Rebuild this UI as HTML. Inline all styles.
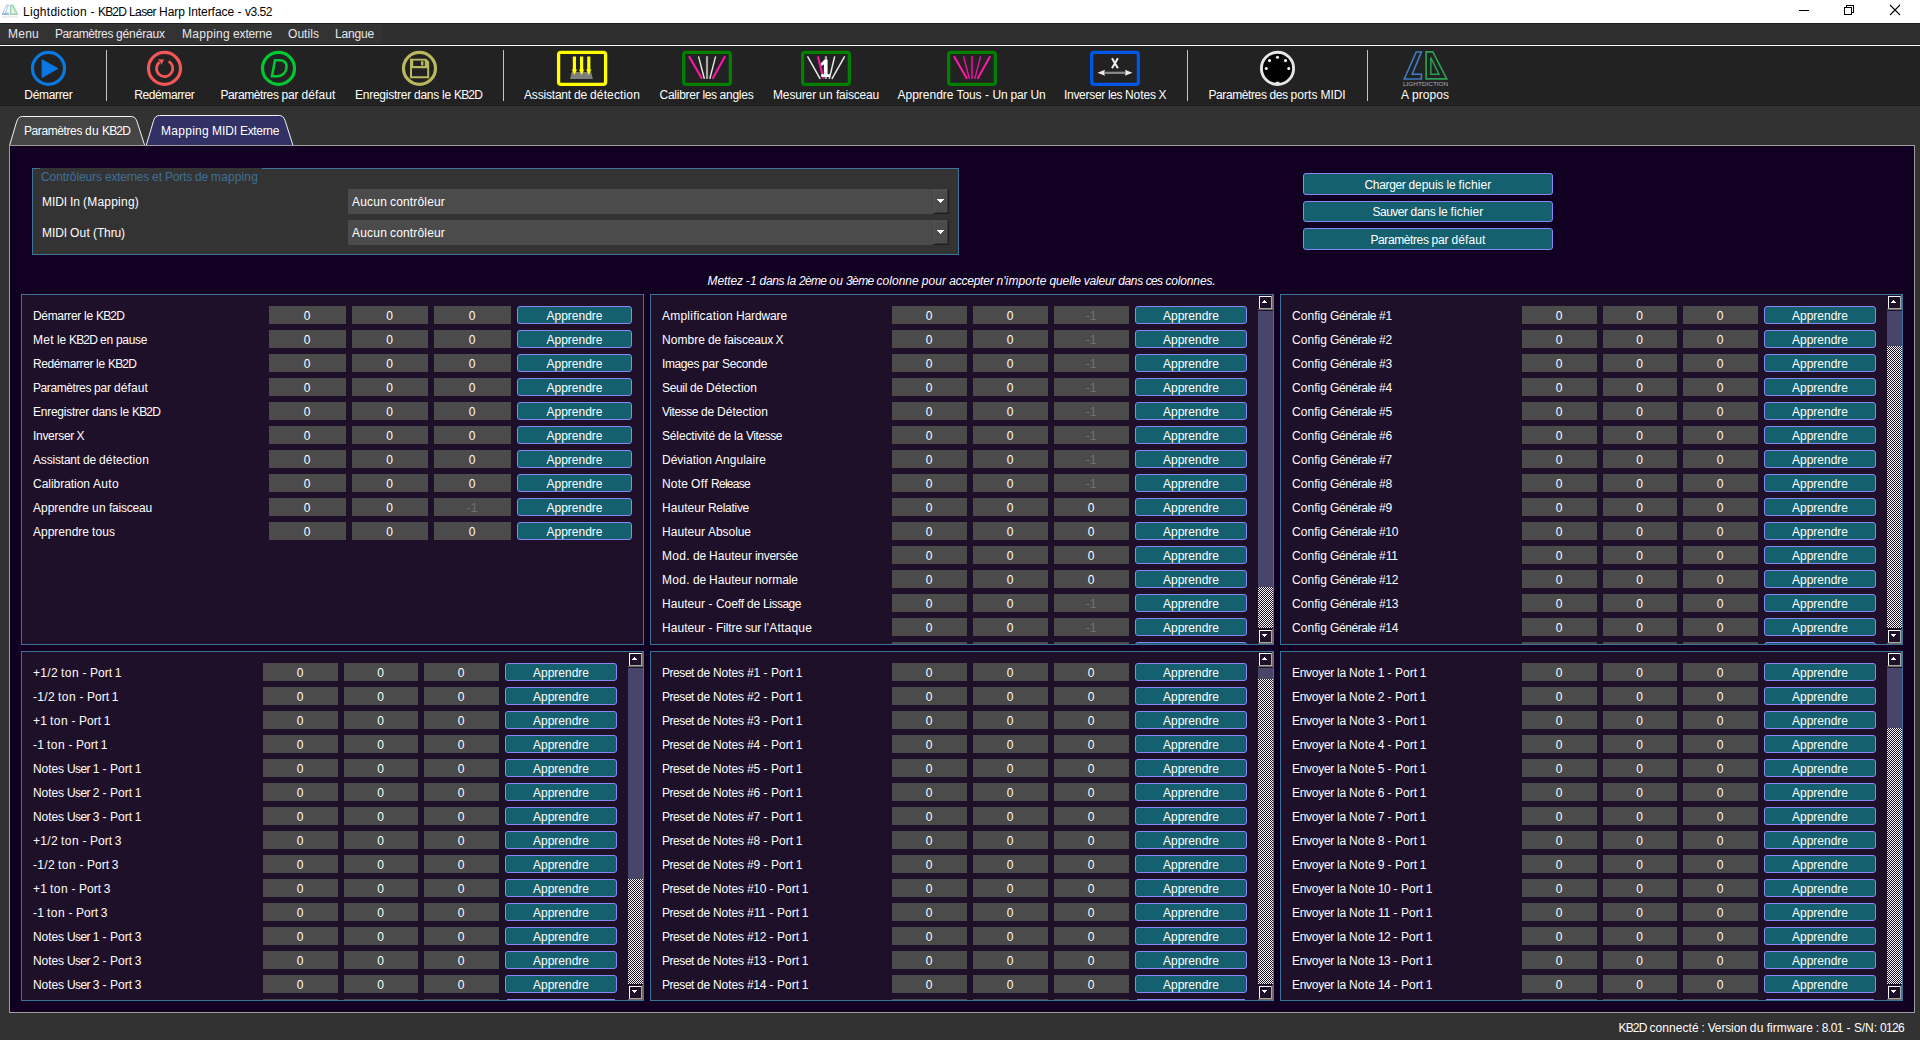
<!DOCTYPE html>
<html><head><meta charset="utf-8"><title>Lightdiction - KB2D Laser Harp Interface - v3.52</title>
<style>
html,body{margin:0;padding:0}
body{width:1920px;height:1040px;position:relative;overflow:hidden;background:#323232;font-family:"Liberation Sans",sans-serif;font-size:12px;color:#fff}
.t{position:absolute;white-space:pre;display:block;font-size:12px;line-height:14px;color:#fff}
div,svg{box-sizing:border-box}
.f{position:absolute;height:18px;background:#4b4b4b}
.b{position:absolute;height:18px;background:#14606e;border:1px solid #8a86f6;border-radius:3px}
.ck{position:absolute;background:repeating-conic-gradient(#1e1029 0% 25%,#fff 0% 50%) 0 0/2px 2px}
.th{position:absolute;background:#47456a}
</style></head><body>
<div style="position:absolute;left:0px;top:0px;width:1920px;height:23px;background:#fff;"></div>
<svg style="position:absolute;left:0;top:0" width="20" height="20" viewBox="0 0 20 20">
<path d="M6.4 5.1 L8.5 5.1 L5.5 13 L8.5 13 L8.5 14.5 L2.4 14.5 Z" fill="none" stroke="#8db2de" stroke-width="0.8"/>
<rect x="2.2" y="13.2" width="6.6" height="1.5" fill="#8db2de"/>
<path d="M10.3 5.1 L13 5.1 L17.8 14.5 L10.3 14.5 Z" fill="#bfe4cd" stroke="#7fc69c" stroke-width="0.8"/>
<path d="M11.9 7.4 L14.6 13 L11.9 13 Z" fill="#f4fbf6"/>
<rect x="2" y="16.3" width="16" height="1.1" fill="#e6e6e6"/>
</svg>
<span class="t" style="left:23px;top:4.84px;letter-spacing:0.273px;color:#000;">Lightdiction </span>
<span class="t" style="left:90.5px;top:4.84px;letter-spacing:0.000px;color:#000;">- </span>
<span class="t" style="left:98px;top:4.84px;letter-spacing:-0.840px;color:#000;">KB2D </span>
<span class="t" style="left:129px;top:4.84px;letter-spacing:-0.606px;color:#000;">Laser </span>
<span class="t" style="left:159px;top:4.84px;letter-spacing:-0.004px;color:#000;">Harp </span>
<span class="t" style="left:188px;top:4.84px;letter-spacing:-0.078px;color:#000;">Interface </span>
<span class="t" style="left:237.5px;top:4.84px;letter-spacing:0.000px;color:#000;">- </span>
<span class="t" style="left:245px;top:4.84px;letter-spacing:-0.472px;color:#000;">v3.52</span>
<svg style="position:absolute;left:1780px;top:0" width="140" height="23" viewBox="0 0 140 23" shape-rendering="crispEdges">
<rect x="19" y="10" width="10" height="1" fill="#000"/>
<g fill="none" stroke="#000" stroke-width="1"><rect x="64.5" y="7.5" width="7" height="7"/><path d="M66.5 7.5 V5.5 H73.5 V12.5 H71.5"/></g>
<g stroke="#000" stroke-width="1.1" shape-rendering="auto"><path d="M110 5 L120 15 M120 5 L110 15"/></g>
</svg>
<div style="position:absolute;left:0px;top:23px;width:1920px;height:22px;background:#2f2f2f;"></div>
<div style="position:absolute;left:0px;top:23px;width:382px;height:22px;background:#333;"></div>
<div style="position:absolute;left:0px;top:23px;width:1920px;height:1px;background:#1f1f1f;"></div>
<div style="position:absolute;left:0px;top:44px;width:1920px;height:1px;background:#1e1e1e;"></div>
<div style="position:absolute;left:0px;top:45px;width:1920px;height:1px;background:#fff;"></div>
<span class="t" style="left:8px;top:26.84px;letter-spacing:0.242px;color:#e8e8ee;">Menu</span>
<span class="t" style="left:55px;top:26.84px;letter-spacing:-0.403px;color:#e8e8ee;">Paramètres </span>
<span class="t" style="left:116px;top:26.84px;letter-spacing:-0.131px;color:#e8e8ee;">généraux</span>
<span class="t" style="left:182px;top:26.84px;letter-spacing:0.281px;color:#e8e8ee;">Mapping </span>
<span class="t" style="left:233px;top:26.84px;letter-spacing:-0.147px;color:#e8e8ee;">externe</span>
<span class="t" style="left:288px;top:26.84px;letter-spacing:0.052px;color:#e8e8ee;">Outils</span>
<span class="t" style="left:335px;top:26.84px;letter-spacing:-0.174px;color:#e8e8ee;">Langue</span>
<div style="position:absolute;left:0px;top:46px;width:1920px;height:60px;background:#222;"></div>
<div style="position:absolute;left:0px;top:105px;width:1920px;height:1px;background:#1b1b1b;"></div>
<div style="position:absolute;left:106px;top:50px;width:1px;height:51px;background:#c4c4c4;"></div>
<div style="position:absolute;left:503px;top:50px;width:1px;height:51px;background:#c4c4c4;"></div>
<div style="position:absolute;left:1187px;top:50px;width:1px;height:51px;background:#c4c4c4;"></div>
<div style="position:absolute;left:1367px;top:50px;width:1px;height:51px;background:#c4c4c4;"></div>
<span class="t" style="left:24.33px;top:87.84px;letter-spacing:-0.334px;">Démarrer</span>
<span class="t" style="left:134.3px;top:87.84px;letter-spacing:-0.403px;">Redémarrer</span>
<span class="t" style="left:220.5px;top:87.84px;letter-spacing:-0.403px;">Paramètres </span>
<span class="t" style="left:281.5px;top:87.84px;letter-spacing:-0.115px;">par </span>
<span class="t" style="left:301.5px;top:87.84px;letter-spacing:0.104px;">défaut</span>
<span class="t" style="left:355px;top:87.84px;letter-spacing:-0.244px;">Enregistrer </span>
<span class="t" style="left:414px;top:87.84px;letter-spacing:-0.258px;">dans </span>
<span class="t" style="left:442px;top:87.84px;letter-spacing:-0.172px;">le </span>
<span class="t" style="left:454px;top:87.84px;letter-spacing:-0.840px;">KB2D</span>
<span class="t" style="left:524px;top:87.84px;letter-spacing:-0.188px;">Assistant </span>
<span class="t" style="left:574px;top:87.84px;letter-spacing:-0.180px;">de </span>
<span class="t" style="left:590px;top:87.84px;letter-spacing:0.144px;">détection</span>
<span class="t" style="left:659.5px;top:87.84px;letter-spacing:-0.252px;">Calibrer </span>
<span class="t" style="left:702.5px;top:87.84px;letter-spacing:-0.448px;">les </span>
<span class="t" style="left:719.5px;top:87.84px;letter-spacing:-0.229px;">angles</span>
<span class="t" style="left:773px;top:87.84px;letter-spacing:-0.145px;">Mesurer </span>
<span class="t" style="left:819px;top:87.84px;letter-spacing:0.320px;">un </span>
<span class="t" style="left:836px;top:87.84px;letter-spacing:-0.213px;">faisceau</span>
<span class="t" style="left:897.5px;top:87.84px;letter-spacing:-0.005px;">Apprendre </span>
<span class="t" style="left:956.5px;top:87.84px;letter-spacing:-0.090px;">Tous </span>
<span class="t" style="left:985px;top:87.84px;letter-spacing:0.000px;">- </span>
<span class="t" style="left:992.5px;top:87.84px;letter-spacing:-0.172px;">Un </span>
<span class="t" style="left:1010.5px;top:87.84px;letter-spacing:-0.115px;">par </span>
<span class="t" style="left:1030.5px;top:87.84px;letter-spacing:-0.172px;">Un</span>
<span class="t" style="left:1064px;top:87.84px;letter-spacing:-0.295px;">Inverser </span>
<span class="t" style="left:1108px;top:87.84px;letter-spacing:-0.448px;">les </span>
<span class="t" style="left:1125px;top:87.84px;letter-spacing:-0.072px;">Notes </span>
<span class="t" style="left:1158.49px;top:87.84px;letter-spacing:0.000px;">X</span>
<span class="t" style="left:1208.5px;top:87.84px;letter-spacing:-0.403px;">Paramètres </span>
<span class="t" style="left:1269.5px;top:87.84px;letter-spacing:-0.453px;">des </span>
<span class="t" style="left:1290.5px;top:87.84px;letter-spacing:0.062px;">ports </span>
<span class="t" style="left:1320.5px;top:87.84px;letter-spacing:-0.086px;">MIDI</span>
<span class="t" style="left:1400.99px;top:87.84px;letter-spacing:0.000px;">A </span>
<span class="t" style="left:1412px;top:87.84px;letter-spacing:0.049px;">propos</span>
<svg style="position:absolute;left:0;top:46px" width="1920" height="60" viewBox="0 46 1920 60">
<circle cx="48.5" cy="68.4" r="16" fill="none" stroke="#0b78e3" stroke-width="3.2"/>
<path d="M42.2 60 L57.6 68.5 L42.2 77.2 Z" fill="#0b78e3" stroke="#0b78e3" stroke-width="1.2" stroke-linejoin="round"/>
<circle cx="164.5" cy="68.4" r="16" fill="none" stroke="#f25757" stroke-width="3.2"/>
<path d="M168.6 61.4 A8.1 8.1 0 1 1 159.6 62.1" fill="none" stroke="#f25757" stroke-width="2.7"/>
<path d="M158 59.2 L164.2 59.6 L161.2 65 L160.6 62.6 Z" fill="#f25757"/>
<circle cx="278.5" cy="68.4" r="16" fill="none" stroke="#00c832" stroke-width="3.2"/>
<path d="M275 60.2 L272 76.2 L277.5 76.2 C283.5 76.2 286.6 71 286.6 66.4 C286.6 62 283.5 60.2 279.5 60.2 Z" fill="none" stroke="#00c832" stroke-width="2.6" stroke-linejoin="miter"/>
<circle cx="419.5" cy="68.4" r="16" fill="none" stroke="#b8b85e" stroke-width="3.2"/>
<path d="M411 59.8 L425.8 59.8 L428.2 62.2 L428.2 77.2 L411 77.2 Z" fill="none" stroke="#b8b85e" stroke-width="2"/>
<path d="M411 59.8 H425.8 L428.2 62.2 V68.2 H411 Z" fill="#b8b85e"/>
<rect x="413.2" y="60.6" width="11.6" height="5.4" fill="#222"/>
<rect x="421" y="61.2" width="2.4" height="4.2" fill="#b8b85e"/>
<rect x="558.6" y="52.4" width="47" height="32" rx="2.3" fill="none" stroke="#ffff00" stroke-width="3.3"/>
<path d="M571.7 72 L591.2 72 L592.8 79 L570 79 Z" fill="#7d7d7d"/>
<path d="M572.8 56.4 H576.0 V69.4 H577.1 L574.4 75 L571.6999999999999 69.4 H572.8 Z" fill="#ffff00"/>
<path d="M580.0 56.4 H583.2 V69.4 H584.3000000000001 L581.6 75 L578.9 69.4 H580.0 Z" fill="#ffff00"/>
<path d="M587.1999999999999 56.4 H590.4 V69.4 H591.5 L588.8 75 L586.0999999999999 69.4 H587.1999999999999 Z" fill="#ffff00"/>
<rect x="683.65" y="52.4" width="46.7" height="32" rx="2.3" fill="none" stroke="#008000" stroke-width="3.3"/>
<path d="M689 56.2 L702 78.8" stroke="#ff17a6" stroke-width="2.1"/>
<path d="M698.5 56.4 L704.4 78.8" stroke="#e8e8e8" stroke-width="1.4"/>
<path d="M707 56.2 V78.9" stroke="#a6a6a6" stroke-width="2.2"/>
<path d="M715.6 56.4 L709.8 78.8" stroke="#e8e8e8" stroke-width="1.4"/>
<path d="M725.1 56.2 L712.6 78.8" stroke="#ff17a6" stroke-width="2.1"/>
<rect x="802.65" y="52.4" width="46.7" height="32" rx="2.3" fill="none" stroke="#008000" stroke-width="3.3"/>
<path d="M807.5 56.4 L820.2 78.8" stroke="#e8e8e8" stroke-width="1.5"/>
<path d="M817.9 56.4 L823.5 78.6" stroke="#ff17a6" stroke-width="2.1"/>
<path d="M825.9 56.2 V78.9" stroke="#a6a6a6" stroke-width="2.2"/>
<path d="M834.7 56.4 L829.3 78.8" stroke="#e8e8e8" stroke-width="1.5"/>
<path d="M844.7 56.4 L831.9 78.8" stroke="#e8e8e8" stroke-width="1.5"/>
<path d="M824.6 59.6 L827.6 59.6 L827.6 74.2 L829.8 74.2 L829.8 77 L821.2 77 L821.2 74.2 L823.9 74.2 L823.9 64.6 L821.2 66 L821 63.2 Z" fill="#fff"/>
<rect x="948.65" y="52.4" width="46.7" height="32" rx="2.3" fill="none" stroke="#008000" stroke-width="3.3"/>
<path d="M954 56.2 L967 78.8" stroke="#ff17a6" stroke-width="2.1"/>
<path d="M963.5 56.4 L969.4 78.8" stroke="#e0159a" stroke-width="1.5"/>
<path d="M972 56.2 V78.9" stroke="#c2128a" stroke-width="2.2"/>
<path d="M980.6 56.4 L974.8 78.8" stroke="#e0159a" stroke-width="1.5"/>
<path d="M990.1 56.2 L977.6 78.8" stroke="#ff17a6" stroke-width="2.1"/>
<rect x="1091.65" y="52.4" width="46.7" height="32" rx="2.3" fill="none" stroke="#0057e6" stroke-width="3.3"/>
<path d="M1103 72.8 H1127" stroke="#8c8c8c" stroke-width="2.2"/>
<path d="M1097.5 72.8 L1105 69.8 L1104 72.8 L1105 75.8 Z" fill="#ececec"/>
<path d="M1132.4 72.8 L1124.9 69.8 L1125.9 72.8 L1124.9 75.8 Z" fill="#ececec"/>
<path d="M1112 58.2 L1117.9 68.3 M1117.9 58.2 L1112 68.3" stroke="#ededed" stroke-width="2.1"/>
<circle cx="1277.5" cy="68.4" r="16.1" fill="#000" stroke="#e6e6e6" stroke-width="2.9"/>
<circle cx="1277.5" cy="57.3" r="1.55" fill="#f2f2f2"/>
<circle cx="1269.5" cy="60.6" r="1.55" fill="#f2f2f2"/>
<circle cx="1285.5" cy="60.6" r="1.55" fill="#f2f2f2"/>
<circle cx="1266.3" cy="68.5" r="1.55" fill="#f2f2f2"/>
<circle cx="1288.8" cy="68.5" r="1.55" fill="#f2f2f2"/>
<path d="M1274.6 83.6 Q1277.5 79.6 1280.4 83.6 Z" fill="#e6e6e6"/>
<path d="M1416.2 51.9 L1421.4 51.9 L1412.2 74.3 L1421.4 74.3 L1421.4 78.9 L1404.3 78.9 Z" fill="none" stroke="#3f7cc4" stroke-width="1.55"/>
<path d="M1426.1 51.9 L1432.8 51.9 L1446.8 78.9 L1426.1 78.9 Z" fill="none" stroke="#2d9e52" stroke-width="1.65"/>
<path d="M1430.8 57.6 L1439 74.2 L1430.8 74.2 Z" fill="none" stroke="#2d9e52" stroke-width="1.45"/>
<text x="1403" y="85.8" font-family="Liberation Sans" font-size="6.2" fill="#b0b0b0" textLength="45.2" lengthAdjust="spacingAndGlyphs">LIGHTDICTION</text>
</svg>
<svg style="position:absolute;left:0;top:110px" width="320" height="36" viewBox="0 110 320 36">
<path d="M9.6 145.5 L16.8 121.2 Q18.3 116.5 22.3 116.5 L131.2 116.5 Q135.2 116.5 136.9 121.2 L144.7 145.5 Z" fill="#454545" stroke="#f2f2f2" stroke-width="1"/>
<path d="M146.2 145.5 L153.7 120.4 Q155.2 115.5 159.4 115.5 L279.2 115.5 Q283.4 115.5 285 120.4 L293 145.5 Z" fill="#313166" stroke="#f2f2f2" stroke-width="1"/>
</svg>
<span class="t" style="left:24px;top:123.84px;letter-spacing:-0.403px;">Paramètres </span>
<span class="t" style="left:85px;top:123.84px;letter-spacing:0.320px;">du </span>
<span class="t" style="left:102px;top:123.84px;letter-spacing:-0.840px;">KB2D</span>
<span class="t" style="left:161px;top:123.84px;letter-spacing:0.281px;">Mapping </span>
<span class="t" style="left:212px;top:123.84px;letter-spacing:-0.086px;">MIDI </span>
<span class="t" style="left:240px;top:123.84px;letter-spacing:-0.337px;">Externe</span>
<div style="position:absolute;left:9px;top:145px;width:1906px;height:868px;background:#120022;border:1px solid #9c9c9c"></div>
<div style="position:absolute;left:32px;top:168px;width:927px;height:87px;background:#333;border:1px solid #3e7399"></div>
<div style="position:absolute;left:40px;top:168px;width:222px;height:1px;background:#333;"></div>
<span class="t" style="left:41px;top:169.84px;letter-spacing:-0.094px;color:#3f6f98;">Contrôleurs </span>
<span class="t" style="left:105px;top:169.84px;letter-spacing:-0.254px;color:#3f6f98;">externes </span>
<span class="t" style="left:152px;top:169.84px;letter-spacing:-0.008px;color:#3f6f98;">et </span>
<span class="t" style="left:165px;top:169.84px;letter-spacing:-0.203px;color:#3f6f98;">Ports </span>
<span class="t" style="left:195px;top:169.84px;letter-spacing:-0.180px;color:#3f6f98;">de </span>
<span class="t" style="left:211px;top:169.84px;letter-spacing:0.138px;color:#3f6f98;">mapping</span>
<span class="t" style="left:42px;top:194.84px;letter-spacing:-0.086px;">MIDI </span>
<span class="t" style="left:70px;top:194.84px;letter-spacing:-0.008px;">In </span>
<span class="t" style="left:83px;top:194.84px;letter-spacing:0.219px;">(Mapping)</span>
<span class="t" style="left:42px;top:225.84px;letter-spacing:-0.086px;">MIDI </span>
<span class="t" style="left:70px;top:225.84px;letter-spacing:0.219px;">Out </span>
<span class="t" style="left:93px;top:225.84px;letter-spacing:-0.112px;">(Thru)</span>
<div style="position:absolute;left:348px;top:189px;width:600px;height:25px;background:#4b4b4b;"></div>
<div style="position:absolute;left:948px;top:189px;width:1px;height:25px;background:#1e1e1e;"></div>
<div style="position:absolute;left:933px;top:213px;width:16px;height:1px;background:#1e1e1e;"></div>
<div style="position:absolute;left:947px;top:190px;width:1px;height:23px;background:#363636;"></div>
<div style="position:absolute;left:935px;top:212px;width:13px;height:1px;background:#363636;"></div>
<div style="position:absolute;left:934px;top:190px;width:1px;height:23px;background:#585252;"></div>
<div style="position:absolute;left:934px;top:190px;width:13px;height:1px;background:#585252;"></div>
<div style="position:absolute;left:937px;top:199px;width:7px;height:1px;background:#fff;"></div>
<div style="position:absolute;left:938px;top:200px;width:5px;height:1px;background:#fff;"></div>
<div style="position:absolute;left:939px;top:201px;width:3px;height:1px;background:#fff;"></div>
<div style="position:absolute;left:940px;top:202px;width:1px;height:1px;background:#fff;"></div>
<span class="t" style="left:352px;top:194.84px;letter-spacing:0.194px;">Aucun </span>
<span class="t" style="left:390px;top:194.84px;letter-spacing:0.163px;">contrôleur</span>
<div style="position:absolute;left:348px;top:220px;width:600px;height:25px;background:#4b4b4b;"></div>
<div style="position:absolute;left:948px;top:220px;width:1px;height:25px;background:#1e1e1e;"></div>
<div style="position:absolute;left:933px;top:244px;width:16px;height:1px;background:#1e1e1e;"></div>
<div style="position:absolute;left:947px;top:221px;width:1px;height:23px;background:#363636;"></div>
<div style="position:absolute;left:935px;top:243px;width:13px;height:1px;background:#363636;"></div>
<div style="position:absolute;left:934px;top:221px;width:1px;height:23px;background:#585252;"></div>
<div style="position:absolute;left:934px;top:221px;width:13px;height:1px;background:#585252;"></div>
<div style="position:absolute;left:937px;top:230px;width:7px;height:1px;background:#fff;"></div>
<div style="position:absolute;left:938px;top:231px;width:5px;height:1px;background:#fff;"></div>
<div style="position:absolute;left:939px;top:232px;width:3px;height:1px;background:#fff;"></div>
<div style="position:absolute;left:940px;top:233px;width:1px;height:1px;background:#fff;"></div>
<span class="t" style="left:352px;top:225.84px;letter-spacing:0.194px;">Aucun </span>
<span class="t" style="left:390px;top:225.84px;letter-spacing:0.163px;">contrôleur</span>
<div class="b" style="left:1303px;top:173px;width:250px;height:22px"></div>
<span class="t" style="left:1364.5px;top:177.84px;letter-spacing:-0.337px;">Charger </span>
<span class="t" style="left:1408.5px;top:177.84px;letter-spacing:-0.062px;">depuis </span>
<span class="t" style="left:1446.5px;top:177.84px;letter-spacing:-0.172px;">le </span>
<span class="t" style="left:1458.5px;top:177.84px;letter-spacing:0.141px;">fichier</span>
<div class="b" style="left:1303px;top:201px;width:250px;height:21px"></div>
<span class="t" style="left:1372.5px;top:204.84px;letter-spacing:-0.505px;">Sauver </span>
<span class="t" style="left:1410.5px;top:204.84px;letter-spacing:-0.258px;">dans </span>
<span class="t" style="left:1438.5px;top:204.84px;letter-spacing:-0.172px;">le </span>
<span class="t" style="left:1450.5px;top:204.84px;letter-spacing:0.141px;">fichier</span>
<div class="b" style="left:1303px;top:228px;width:250px;height:22px"></div>
<span class="t" style="left:1370.5px;top:232.84px;letter-spacing:-0.403px;">Paramètres </span>
<span class="t" style="left:1431.5px;top:232.84px;letter-spacing:-0.115px;">par </span>
<span class="t" style="left:1451.5px;top:232.84px;letter-spacing:0.104px;">défaut</span>
<span class="t" style="left:707.5px;top:273.84px;letter-spacing:-0.107px;font-style:italic;">Mettez </span>
<span class="t" style="left:745.82px;top:273.84px;letter-spacing:0.068px;font-style:italic;">-1 </span>
<span class="t" style="left:759.58px;top:273.84px;letter-spacing:-0.367px;font-style:italic;">dans </span>
<span class="t" style="left:787.09px;top:273.84px;letter-spacing:-0.250px;font-style:italic;">la </span>
<span class="t" style="left:798.88px;top:273.84px;letter-spacing:-0.630px;font-style:italic;">2ème </span>
<span class="t" style="left:829.34px;top:273.84px;letter-spacing:0.198px;font-style:italic;">ou </span>
<span class="t" style="left:846.05px;top:273.84px;letter-spacing:-0.630px;font-style:italic;">3ème </span>
<span class="t" style="left:876.51px;top:273.84px;letter-spacing:0.029px;font-style:italic;">colonne </span>
<span class="t" style="left:921.71px;top:273.84px;letter-spacing:0.133px;font-style:italic;">pour </span>
<span class="t" style="left:949.22px;top:273.84px;letter-spacing:-0.227px;font-style:italic;">accepter </span>
<span class="t" style="left:996.38px;top:273.84px;letter-spacing:0.125px;font-style:italic;">n&#x27;importe </span>
<span class="t" style="left:1049.44px;top:273.84px;letter-spacing:-0.098px;font-style:italic;">quelle </span>
<span class="t" style="left:1083.83px;top:273.84px;letter-spacing:-0.207px;font-style:italic;">valeur </span>
<span class="t" style="left:1118.22px;top:273.84px;letter-spacing:-0.367px;font-style:italic;">dans </span>
<span class="t" style="left:1145.74px;top:273.84px;letter-spacing:-0.661px;font-style:italic;">ces </span>
<span class="t" style="left:1165.39px;top:273.84px;letter-spacing:-0.140px;font-style:italic;">colonnes.</span>
<div style="position:absolute;left:21px;top:294px;width:623px;height:351px;background:#1e1029;border:1px solid #3e7399"></div>
<span class="t" style="left:33px;top:308.84px;letter-spacing:-0.334px;">Démarrer </span>
<span class="t" style="left:84px;top:308.84px;letter-spacing:-0.172px;">le </span>
<span class="t" style="left:96px;top:308.84px;letter-spacing:-0.840px;">KB2D</span>
<div class="f" style="left:269px;top:306px;width:77px"></div>
<span class="t" style="left:303.76px;top:308.84px;letter-spacing:0.000px;">0</span>
<div class="f" style="left:352px;top:306px;width:76px"></div>
<span class="t" style="left:386.26px;top:308.84px;letter-spacing:0.000px;">0</span>
<div class="f" style="left:434px;top:306px;width:77px"></div>
<span class="t" style="left:468.76px;top:308.84px;letter-spacing:0.000px;">0</span>
<div class="b" style="left:517px;top:306px;width:115px"></div>
<span class="t" style="left:546.5px;top:308.84px;letter-spacing:-0.005px;">Apprendre</span>
<span class="t" style="left:33px;top:332.84px;letter-spacing:0.328px;">Met </span>
<span class="t" style="left:57px;top:332.84px;letter-spacing:-0.172px;">le </span>
<span class="t" style="left:69px;top:332.84px;letter-spacing:-0.840px;">KB2D </span>
<span class="t" style="left:100px;top:332.84px;letter-spacing:-0.180px;">en </span>
<span class="t" style="left:116px;top:332.84px;letter-spacing:-0.341px;">pause</span>
<div class="f" style="left:269px;top:330px;width:77px"></div>
<span class="t" style="left:303.76px;top:332.84px;letter-spacing:0.000px;">0</span>
<div class="f" style="left:352px;top:330px;width:76px"></div>
<span class="t" style="left:386.26px;top:332.84px;letter-spacing:0.000px;">0</span>
<div class="f" style="left:434px;top:330px;width:77px"></div>
<span class="t" style="left:468.76px;top:332.84px;letter-spacing:0.000px;">0</span>
<div class="b" style="left:517px;top:330px;width:115px"></div>
<span class="t" style="left:546.5px;top:332.84px;letter-spacing:-0.005px;">Apprendre</span>
<span class="t" style="left:33px;top:356.84px;letter-spacing:-0.403px;">Redémarrer </span>
<span class="t" style="left:96px;top:356.84px;letter-spacing:-0.172px;">le </span>
<span class="t" style="left:108px;top:356.84px;letter-spacing:-0.840px;">KB2D</span>
<div class="f" style="left:269px;top:354px;width:77px"></div>
<span class="t" style="left:303.76px;top:356.84px;letter-spacing:0.000px;">0</span>
<div class="f" style="left:352px;top:354px;width:76px"></div>
<span class="t" style="left:386.26px;top:356.84px;letter-spacing:0.000px;">0</span>
<div class="f" style="left:434px;top:354px;width:77px"></div>
<span class="t" style="left:468.76px;top:356.84px;letter-spacing:0.000px;">0</span>
<div class="b" style="left:517px;top:354px;width:115px"></div>
<span class="t" style="left:546.5px;top:356.84px;letter-spacing:-0.005px;">Apprendre</span>
<span class="t" style="left:33px;top:380.84px;letter-spacing:-0.403px;">Paramètres </span>
<span class="t" style="left:94px;top:380.84px;letter-spacing:-0.115px;">par </span>
<span class="t" style="left:114px;top:380.84px;letter-spacing:0.104px;">défaut</span>
<div class="f" style="left:269px;top:378px;width:77px"></div>
<span class="t" style="left:303.76px;top:380.84px;letter-spacing:0.000px;">0</span>
<div class="f" style="left:352px;top:378px;width:76px"></div>
<span class="t" style="left:386.26px;top:380.84px;letter-spacing:0.000px;">0</span>
<div class="f" style="left:434px;top:378px;width:77px"></div>
<span class="t" style="left:468.76px;top:380.84px;letter-spacing:0.000px;">0</span>
<div class="b" style="left:517px;top:378px;width:115px"></div>
<span class="t" style="left:546.5px;top:380.84px;letter-spacing:-0.005px;">Apprendre</span>
<span class="t" style="left:33px;top:404.84px;letter-spacing:-0.244px;">Enregistrer </span>
<span class="t" style="left:92px;top:404.84px;letter-spacing:-0.258px;">dans </span>
<span class="t" style="left:120px;top:404.84px;letter-spacing:-0.172px;">le </span>
<span class="t" style="left:132px;top:404.84px;letter-spacing:-0.840px;">KB2D</span>
<div class="f" style="left:269px;top:402px;width:77px"></div>
<span class="t" style="left:303.76px;top:404.84px;letter-spacing:0.000px;">0</span>
<div class="f" style="left:352px;top:402px;width:76px"></div>
<span class="t" style="left:386.26px;top:404.84px;letter-spacing:0.000px;">0</span>
<div class="f" style="left:434px;top:402px;width:77px"></div>
<span class="t" style="left:468.76px;top:404.84px;letter-spacing:0.000px;">0</span>
<div class="b" style="left:517px;top:402px;width:115px"></div>
<span class="t" style="left:546.5px;top:404.84px;letter-spacing:-0.005px;">Apprendre</span>
<span class="t" style="left:33px;top:428.84px;letter-spacing:-0.295px;">Inverser </span>
<span class="t" style="left:76.49px;top:428.84px;letter-spacing:0.000px;">X</span>
<div class="f" style="left:269px;top:426px;width:77px"></div>
<span class="t" style="left:303.76px;top:428.84px;letter-spacing:0.000px;">0</span>
<div class="f" style="left:352px;top:426px;width:76px"></div>
<span class="t" style="left:386.26px;top:428.84px;letter-spacing:0.000px;">0</span>
<div class="f" style="left:434px;top:426px;width:77px"></div>
<span class="t" style="left:468.76px;top:428.84px;letter-spacing:0.000px;">0</span>
<div class="b" style="left:517px;top:426px;width:115px"></div>
<span class="t" style="left:546.5px;top:428.84px;letter-spacing:-0.005px;">Apprendre</span>
<span class="t" style="left:33px;top:452.84px;letter-spacing:-0.188px;">Assistant </span>
<span class="t" style="left:83px;top:452.84px;letter-spacing:-0.180px;">de </span>
<span class="t" style="left:99px;top:452.84px;letter-spacing:0.144px;">détection</span>
<div class="f" style="left:269px;top:450px;width:77px"></div>
<span class="t" style="left:303.76px;top:452.84px;letter-spacing:0.000px;">0</span>
<div class="f" style="left:352px;top:450px;width:76px"></div>
<span class="t" style="left:386.26px;top:452.84px;letter-spacing:0.000px;">0</span>
<div class="f" style="left:434px;top:450px;width:77px"></div>
<span class="t" style="left:468.76px;top:452.84px;letter-spacing:0.000px;">0</span>
<div class="b" style="left:517px;top:450px;width:115px"></div>
<span class="t" style="left:546.5px;top:452.84px;letter-spacing:-0.005px;">Apprendre</span>
<span class="t" style="left:33px;top:476.84px;letter-spacing:-0.034px;">Calibration </span>
<span class="t" style="left:93px;top:476.84px;letter-spacing:0.328px;">Auto</span>
<div class="f" style="left:269px;top:474px;width:77px"></div>
<span class="t" style="left:303.76px;top:476.84px;letter-spacing:0.000px;">0</span>
<div class="f" style="left:352px;top:474px;width:76px"></div>
<span class="t" style="left:386.26px;top:476.84px;letter-spacing:0.000px;">0</span>
<div class="f" style="left:434px;top:474px;width:77px"></div>
<span class="t" style="left:468.76px;top:476.84px;letter-spacing:0.000px;">0</span>
<div class="b" style="left:517px;top:474px;width:115px"></div>
<span class="t" style="left:546.5px;top:476.84px;letter-spacing:-0.005px;">Apprendre</span>
<span class="t" style="left:33px;top:500.84px;letter-spacing:-0.005px;">Apprendre </span>
<span class="t" style="left:92px;top:500.84px;letter-spacing:0.320px;">un </span>
<span class="t" style="left:109px;top:500.84px;letter-spacing:-0.213px;">faisceau</span>
<div class="f" style="left:269px;top:498px;width:77px"></div>
<span class="t" style="left:303.76px;top:500.84px;letter-spacing:0.000px;">0</span>
<div class="f" style="left:352px;top:498px;width:76px"></div>
<span class="t" style="left:386.26px;top:500.84px;letter-spacing:0.000px;">0</span>
<div class="f" style="left:434px;top:498px;width:77px"></div>
<span class="t" style="left:466.68px;top:500.84px;letter-spacing:0.164px;color:#727272;">-1</span>
<div class="b" style="left:517px;top:498px;width:115px"></div>
<span class="t" style="left:546.5px;top:500.84px;letter-spacing:-0.005px;">Apprendre</span>
<span class="t" style="left:33px;top:524.84px;letter-spacing:-0.005px;">Apprendre </span>
<span class="t" style="left:92px;top:524.84px;letter-spacing:0.078px;">tous</span>
<div class="f" style="left:269px;top:522px;width:77px"></div>
<span class="t" style="left:303.76px;top:524.84px;letter-spacing:0.000px;">0</span>
<div class="f" style="left:352px;top:522px;width:76px"></div>
<span class="t" style="left:386.26px;top:524.84px;letter-spacing:0.000px;">0</span>
<div class="f" style="left:434px;top:522px;width:77px"></div>
<span class="t" style="left:468.76px;top:524.84px;letter-spacing:0.000px;">0</span>
<div class="b" style="left:517px;top:522px;width:115px"></div>
<span class="t" style="left:546.5px;top:524.84px;letter-spacing:-0.005px;">Apprendre</span>
<div style="position:absolute;left:650px;top:294px;width:624px;height:351px;background:#1e1029;border:1px solid #3e7399"></div>
<span class="t" style="left:662px;top:308.84px;letter-spacing:0.228px;">Amplification </span>
<span class="t" style="left:736px;top:308.84px;letter-spacing:-0.129px;">Hardware</span>
<div class="f" style="left:892px;top:306px;width:75px"></div>
<span class="t" style="left:925.76px;top:308.84px;letter-spacing:0.000px;">0</span>
<div class="f" style="left:973px;top:306px;width:75px"></div>
<span class="t" style="left:1006.76px;top:308.84px;letter-spacing:0.000px;">0</span>
<div class="f" style="left:1054px;top:306px;width:75px"></div>
<span class="t" style="left:1085.68px;top:308.84px;letter-spacing:0.164px;color:#727272;">-1</span>
<div class="b" style="left:1135px;top:306px;width:112px"></div>
<span class="t" style="left:1163px;top:308.84px;letter-spacing:-0.005px;">Apprendre</span>
<span class="t" style="left:662px;top:332.84px;letter-spacing:0.052px;">Nombre </span>
<span class="t" style="left:708px;top:332.84px;letter-spacing:-0.180px;">de </span>
<span class="t" style="left:724px;top:332.84px;letter-spacing:-0.189px;">faisceaux </span>
<span class="t" style="left:775.49px;top:332.84px;letter-spacing:0.000px;">X</span>
<div class="f" style="left:892px;top:330px;width:75px"></div>
<span class="t" style="left:925.76px;top:332.84px;letter-spacing:0.000px;">0</span>
<div class="f" style="left:973px;top:330px;width:75px"></div>
<span class="t" style="left:1006.76px;top:332.84px;letter-spacing:0.000px;">0</span>
<div class="f" style="left:1054px;top:330px;width:75px"></div>
<span class="t" style="left:1085.68px;top:332.84px;letter-spacing:0.164px;color:#727272;">-1</span>
<div class="b" style="left:1135px;top:330px;width:112px"></div>
<span class="t" style="left:1163px;top:332.84px;letter-spacing:-0.005px;">Apprendre</span>
<span class="t" style="left:662px;top:356.84px;letter-spacing:-0.393px;">Images </span>
<span class="t" style="left:702px;top:356.84px;letter-spacing:-0.115px;">par </span>
<span class="t" style="left:722px;top:356.84px;letter-spacing:-0.339px;">Seconde</span>
<div class="f" style="left:892px;top:354px;width:75px"></div>
<span class="t" style="left:925.76px;top:356.84px;letter-spacing:0.000px;">0</span>
<div class="f" style="left:973px;top:354px;width:75px"></div>
<span class="t" style="left:1006.76px;top:356.84px;letter-spacing:0.000px;">0</span>
<div class="f" style="left:1054px;top:354px;width:75px"></div>
<span class="t" style="left:1085.68px;top:356.84px;letter-spacing:0.164px;color:#727272;">-1</span>
<div class="b" style="left:1135px;top:354px;width:112px"></div>
<span class="t" style="left:1163px;top:356.84px;letter-spacing:-0.005px;">Apprendre</span>
<span class="t" style="left:662px;top:380.84px;letter-spacing:-0.338px;">Seuil </span>
<span class="t" style="left:690px;top:380.84px;letter-spacing:-0.180px;">de </span>
<span class="t" style="left:706px;top:380.84px;letter-spacing:0.033px;">Détection</span>
<div class="f" style="left:892px;top:378px;width:75px"></div>
<span class="t" style="left:925.76px;top:380.84px;letter-spacing:0.000px;">0</span>
<div class="f" style="left:973px;top:378px;width:75px"></div>
<span class="t" style="left:1006.76px;top:380.84px;letter-spacing:0.000px;">0</span>
<div class="f" style="left:1054px;top:378px;width:75px"></div>
<span class="t" style="left:1085.68px;top:380.84px;letter-spacing:0.164px;color:#727272;">-1</span>
<div class="b" style="left:1135px;top:378px;width:112px"></div>
<span class="t" style="left:1163px;top:380.84px;letter-spacing:-0.005px;">Apprendre</span>
<span class="t" style="left:662px;top:404.84px;letter-spacing:-0.449px;">Vitesse </span>
<span class="t" style="left:701px;top:404.84px;letter-spacing:-0.180px;">de </span>
<span class="t" style="left:717px;top:404.84px;letter-spacing:0.033px;">Détection</span>
<div class="f" style="left:892px;top:402px;width:75px"></div>
<span class="t" style="left:925.76px;top:404.84px;letter-spacing:0.000px;">0</span>
<div class="f" style="left:973px;top:402px;width:75px"></div>
<span class="t" style="left:1006.76px;top:404.84px;letter-spacing:0.000px;">0</span>
<div class="f" style="left:1054px;top:402px;width:75px"></div>
<span class="t" style="left:1085.68px;top:404.84px;letter-spacing:0.164px;color:#727272;">-1</span>
<div class="b" style="left:1135px;top:402px;width:112px"></div>
<span class="t" style="left:1163px;top:404.84px;letter-spacing:-0.005px;">Apprendre</span>
<span class="t" style="left:662px;top:428.84px;letter-spacing:-0.155px;">Sélectivité </span>
<span class="t" style="left:718px;top:428.84px;letter-spacing:-0.180px;">de </span>
<span class="t" style="left:734px;top:428.84px;letter-spacing:-0.172px;">la </span>
<span class="t" style="left:746px;top:428.84px;letter-spacing:-0.449px;">Vitesse</span>
<div class="f" style="left:892px;top:426px;width:75px"></div>
<span class="t" style="left:925.76px;top:428.84px;letter-spacing:0.000px;">0</span>
<div class="f" style="left:973px;top:426px;width:75px"></div>
<span class="t" style="left:1006.76px;top:428.84px;letter-spacing:0.000px;">0</span>
<div class="f" style="left:1054px;top:426px;width:75px"></div>
<span class="t" style="left:1085.68px;top:428.84px;letter-spacing:0.164px;color:#727272;">-1</span>
<div class="b" style="left:1135px;top:426px;width:112px"></div>
<span class="t" style="left:1163px;top:428.84px;letter-spacing:-0.005px;">Apprendre</span>
<span class="t" style="left:662px;top:452.84px;letter-spacing:-0.003px;">Déviation </span>
<span class="t" style="left:715px;top:452.84px;letter-spacing:0.033px;">Angulaire</span>
<div class="f" style="left:892px;top:450px;width:75px"></div>
<span class="t" style="left:925.76px;top:452.84px;letter-spacing:0.000px;">0</span>
<div class="f" style="left:973px;top:450px;width:75px"></div>
<span class="t" style="left:1006.76px;top:452.84px;letter-spacing:0.000px;">0</span>
<div class="f" style="left:1054px;top:450px;width:75px"></div>
<span class="t" style="left:1085.68px;top:452.84px;letter-spacing:0.164px;color:#727272;">-1</span>
<div class="b" style="left:1135px;top:450px;width:112px"></div>
<span class="t" style="left:1163px;top:452.84px;letter-spacing:-0.005px;">Apprendre</span>
<span class="t" style="left:662px;top:476.84px;letter-spacing:0.160px;">Note </span>
<span class="t" style="left:691px;top:476.84px;letter-spacing:0.401px;">Off </span>
<span class="t" style="left:711px;top:476.84px;letter-spacing:-0.719px;">Release</span>
<div class="f" style="left:892px;top:474px;width:75px"></div>
<span class="t" style="left:925.76px;top:476.84px;letter-spacing:0.000px;">0</span>
<div class="f" style="left:973px;top:474px;width:75px"></div>
<span class="t" style="left:1006.76px;top:476.84px;letter-spacing:0.000px;">0</span>
<div class="f" style="left:1054px;top:474px;width:75px"></div>
<span class="t" style="left:1085.68px;top:476.84px;letter-spacing:0.164px;color:#727272;">-1</span>
<div class="b" style="left:1135px;top:474px;width:112px"></div>
<span class="t" style="left:1163px;top:476.84px;letter-spacing:-0.005px;">Apprendre</span>
<span class="t" style="left:662px;top:500.84px;letter-spacing:0.042px;">Hauteur </span>
<span class="t" style="left:708px;top:500.84px;letter-spacing:-0.295px;">Relative</span>
<div class="f" style="left:892px;top:498px;width:75px"></div>
<span class="t" style="left:925.76px;top:500.84px;letter-spacing:0.000px;">0</span>
<div class="f" style="left:973px;top:498px;width:75px"></div>
<span class="t" style="left:1006.76px;top:500.84px;letter-spacing:0.000px;">0</span>
<div class="f" style="left:1054px;top:498px;width:75px"></div>
<span class="t" style="left:1087.76px;top:500.84px;letter-spacing:0.000px;">0</span>
<div class="b" style="left:1135px;top:498px;width:112px"></div>
<span class="t" style="left:1163px;top:500.84px;letter-spacing:-0.005px;">Apprendre</span>
<span class="t" style="left:662px;top:524.84px;letter-spacing:0.042px;">Hauteur </span>
<span class="t" style="left:708px;top:524.84px;letter-spacing:-0.054px;">Absolue</span>
<div class="f" style="left:892px;top:522px;width:75px"></div>
<span class="t" style="left:925.76px;top:524.84px;letter-spacing:0.000px;">0</span>
<div class="f" style="left:973px;top:522px;width:75px"></div>
<span class="t" style="left:1006.76px;top:524.84px;letter-spacing:0.000px;">0</span>
<div class="f" style="left:1054px;top:522px;width:75px"></div>
<span class="t" style="left:1087.76px;top:524.84px;letter-spacing:0.000px;">0</span>
<div class="b" style="left:1135px;top:522px;width:112px"></div>
<span class="t" style="left:1163px;top:524.84px;letter-spacing:-0.005px;">Apprendre</span>
<span class="t" style="left:662px;top:548.84px;letter-spacing:0.328px;">Mod. </span>
<span class="t" style="left:693px;top:548.84px;letter-spacing:-0.180px;">de </span>
<span class="t" style="left:709px;top:548.84px;letter-spacing:0.042px;">Hauteur </span>
<span class="t" style="left:755px;top:548.84px;letter-spacing:-0.295px;">inversée</span>
<div class="f" style="left:892px;top:546px;width:75px"></div>
<span class="t" style="left:925.76px;top:548.84px;letter-spacing:0.000px;">0</span>
<div class="f" style="left:973px;top:546px;width:75px"></div>
<span class="t" style="left:1006.76px;top:548.84px;letter-spacing:0.000px;">0</span>
<div class="f" style="left:1054px;top:546px;width:75px"></div>
<span class="t" style="left:1087.76px;top:548.84px;letter-spacing:0.000px;">0</span>
<div class="b" style="left:1135px;top:546px;width:112px"></div>
<span class="t" style="left:1163px;top:548.84px;letter-spacing:-0.005px;">Apprendre</span>
<span class="t" style="left:662px;top:572.84px;letter-spacing:0.328px;">Mod. </span>
<span class="t" style="left:693px;top:572.84px;letter-spacing:-0.180px;">de </span>
<span class="t" style="left:709px;top:572.84px;letter-spacing:0.042px;">Hauteur </span>
<span class="t" style="left:755px;top:572.84px;letter-spacing:-0.051px;">normale</span>
<div class="f" style="left:892px;top:570px;width:75px"></div>
<span class="t" style="left:925.76px;top:572.84px;letter-spacing:0.000px;">0</span>
<div class="f" style="left:973px;top:570px;width:75px"></div>
<span class="t" style="left:1006.76px;top:572.84px;letter-spacing:0.000px;">0</span>
<div class="f" style="left:1054px;top:570px;width:75px"></div>
<span class="t" style="left:1087.76px;top:572.84px;letter-spacing:0.000px;">0</span>
<div class="b" style="left:1135px;top:570px;width:112px"></div>
<span class="t" style="left:1163px;top:572.84px;letter-spacing:-0.005px;">Apprendre</span>
<span class="t" style="left:662px;top:596.84px;letter-spacing:0.042px;">Hauteur </span>
<span class="t" style="left:708.5px;top:596.84px;letter-spacing:0.000px;">- </span>
<span class="t" style="left:716px;top:596.84px;letter-spacing:-0.094px;">Coeff </span>
<span class="t" style="left:747px;top:596.84px;letter-spacing:-0.180px;">de </span>
<span class="t" style="left:763px;top:596.84px;letter-spacing:-0.482px;">Lissage</span>
<div class="f" style="left:892px;top:594px;width:75px"></div>
<span class="t" style="left:925.76px;top:596.84px;letter-spacing:0.000px;">0</span>
<div class="f" style="left:973px;top:594px;width:75px"></div>
<span class="t" style="left:1006.76px;top:596.84px;letter-spacing:0.000px;">0</span>
<div class="f" style="left:1054px;top:594px;width:75px"></div>
<span class="t" style="left:1085.68px;top:596.84px;letter-spacing:0.164px;color:#727272;">-1</span>
<div class="b" style="left:1135px;top:594px;width:112px"></div>
<span class="t" style="left:1163px;top:596.84px;letter-spacing:-0.005px;">Apprendre</span>
<span class="t" style="left:662px;top:620.84px;letter-spacing:0.042px;">Hauteur </span>
<span class="t" style="left:708.5px;top:620.84px;letter-spacing:0.000px;">- </span>
<span class="t" style="left:716px;top:620.84px;letter-spacing:-0.112px;">Filtre </span>
<span class="t" style="left:745px;top:620.84px;letter-spacing:-0.224px;">sur </span>
<span class="t" style="left:764px;top:620.84px;letter-spacing:0.186px;">l&#x27;Attaque</span>
<div class="f" style="left:892px;top:618px;width:75px"></div>
<span class="t" style="left:925.76px;top:620.84px;letter-spacing:0.000px;">0</span>
<div class="f" style="left:973px;top:618px;width:75px"></div>
<span class="t" style="left:1006.76px;top:620.84px;letter-spacing:0.000px;">0</span>
<div class="f" style="left:1054px;top:618px;width:75px"></div>
<span class="t" style="left:1085.68px;top:620.84px;letter-spacing:0.164px;color:#727272;">-1</span>
<div class="b" style="left:1135px;top:618px;width:112px"></div>
<span class="t" style="left:1163px;top:620.84px;letter-spacing:-0.005px;">Apprendre</span>
<div style="position:absolute;left:892px;top:642px;width:75px;height:2px;background:#4b4b4b;"></div>
<div style="position:absolute;left:973px;top:642px;width:75px;height:2px;background:#4b4b4b;"></div>
<div style="position:absolute;left:1054px;top:642px;width:75px;height:2px;background:#4b4b4b;"></div>
<div style="position:absolute;left:1135px;top:642px;width:112px;height:2px;overflow:hidden"><div class="b" style="left:0;top:0;width:112px"></div></div>
<svg style="position:absolute;left:1258px;top:295px" width="15" height="15" viewBox="0 0 15 15" shape-rendering="crispEdges">
<rect x="0" y="0" width="15" height="15" fill="#1e1029"/>
<rect x="1" y="1" width="13" height="1" fill="#fff"/><rect x="1" y="1" width="1" height="13" fill="#fff"/>
<rect x="13" y="1" width="1" height="13" fill="#a8a8a4"/><rect x="1" y="13" width="13" height="1" fill="#a8a8a4"/>
<rect x="14" y="0" width="1" height="15" fill="#6e6a66"/><rect x="0" y="14" width="15" height="1" fill="#6e6a66"/>
<rect x="6" y="5" width="1" height="1" fill="#fff"/><rect x="5" y="6" width="3" height="1" fill="#fff"/><rect x="4" y="7" width="5" height="1" fill="#fff"/></svg>
<svg style="position:absolute;left:1258px;top:629px" width="15" height="15" viewBox="0 0 15 15" shape-rendering="crispEdges">
<rect x="0" y="0" width="15" height="15" fill="#1e1029"/>
<rect x="1" y="1" width="13" height="1" fill="#fff"/><rect x="1" y="1" width="1" height="13" fill="#fff"/>
<rect x="13" y="1" width="1" height="13" fill="#a8a8a4"/><rect x="1" y="13" width="13" height="1" fill="#a8a8a4"/>
<rect x="14" y="0" width="1" height="15" fill="#6e6a66"/><rect x="0" y="14" width="15" height="1" fill="#6e6a66"/>
<rect x="4" y="5" width="5" height="1" fill="#fff"/><rect x="5" y="6" width="3" height="1" fill="#fff"/><rect x="6" y="7" width="1" height="1" fill="#fff"/></svg>
<div class="th" style="left:1258px;top:311px;width:15px;height:276px"></div>
<div class="ck" style="left:1258px;top:587px;width:15px;height:41px;background-position:1px 0;"></div>
<div style="position:absolute;left:1280px;top:294px;width:623px;height:351px;background:#1e1029;border:1px solid #3e7399"></div>
<span class="t" style="left:1292px;top:308.84px;letter-spacing:0.052px;">Config </span>
<span class="t" style="left:1330px;top:308.84px;letter-spacing:-0.422px;">Générale </span>
<span class="t" style="left:1379px;top:308.84px;letter-spacing:-0.180px;">#1</span>
<div class="f" style="left:1522px;top:306px;width:75px"></div>
<span class="t" style="left:1555.76px;top:308.84px;letter-spacing:0.000px;">0</span>
<div class="f" style="left:1603px;top:306px;width:74px"></div>
<span class="t" style="left:1636.26px;top:308.84px;letter-spacing:0.000px;">0</span>
<div class="f" style="left:1683px;top:306px;width:75px"></div>
<span class="t" style="left:1716.76px;top:308.84px;letter-spacing:0.000px;">0</span>
<div class="b" style="left:1764px;top:306px;width:112px"></div>
<span class="t" style="left:1792px;top:308.84px;letter-spacing:-0.005px;">Apprendre</span>
<span class="t" style="left:1292px;top:332.84px;letter-spacing:0.052px;">Config </span>
<span class="t" style="left:1330px;top:332.84px;letter-spacing:-0.422px;">Générale </span>
<span class="t" style="left:1379px;top:332.84px;letter-spacing:-0.180px;">#2</span>
<div class="f" style="left:1522px;top:330px;width:75px"></div>
<span class="t" style="left:1555.76px;top:332.84px;letter-spacing:0.000px;">0</span>
<div class="f" style="left:1603px;top:330px;width:74px"></div>
<span class="t" style="left:1636.26px;top:332.84px;letter-spacing:0.000px;">0</span>
<div class="f" style="left:1683px;top:330px;width:75px"></div>
<span class="t" style="left:1716.76px;top:332.84px;letter-spacing:0.000px;">0</span>
<div class="b" style="left:1764px;top:330px;width:112px"></div>
<span class="t" style="left:1792px;top:332.84px;letter-spacing:-0.005px;">Apprendre</span>
<span class="t" style="left:1292px;top:356.84px;letter-spacing:0.052px;">Config </span>
<span class="t" style="left:1330px;top:356.84px;letter-spacing:-0.422px;">Générale </span>
<span class="t" style="left:1379px;top:356.84px;letter-spacing:-0.180px;">#3</span>
<div class="f" style="left:1522px;top:354px;width:75px"></div>
<span class="t" style="left:1555.76px;top:356.84px;letter-spacing:0.000px;">0</span>
<div class="f" style="left:1603px;top:354px;width:74px"></div>
<span class="t" style="left:1636.26px;top:356.84px;letter-spacing:0.000px;">0</span>
<div class="f" style="left:1683px;top:354px;width:75px"></div>
<span class="t" style="left:1716.76px;top:356.84px;letter-spacing:0.000px;">0</span>
<div class="b" style="left:1764px;top:354px;width:112px"></div>
<span class="t" style="left:1792px;top:356.84px;letter-spacing:-0.005px;">Apprendre</span>
<span class="t" style="left:1292px;top:380.84px;letter-spacing:0.052px;">Config </span>
<span class="t" style="left:1330px;top:380.84px;letter-spacing:-0.422px;">Générale </span>
<span class="t" style="left:1379px;top:380.84px;letter-spacing:-0.180px;">#4</span>
<div class="f" style="left:1522px;top:378px;width:75px"></div>
<span class="t" style="left:1555.76px;top:380.84px;letter-spacing:0.000px;">0</span>
<div class="f" style="left:1603px;top:378px;width:74px"></div>
<span class="t" style="left:1636.26px;top:380.84px;letter-spacing:0.000px;">0</span>
<div class="f" style="left:1683px;top:378px;width:75px"></div>
<span class="t" style="left:1716.76px;top:380.84px;letter-spacing:0.000px;">0</span>
<div class="b" style="left:1764px;top:378px;width:112px"></div>
<span class="t" style="left:1792px;top:380.84px;letter-spacing:-0.005px;">Apprendre</span>
<span class="t" style="left:1292px;top:404.84px;letter-spacing:0.052px;">Config </span>
<span class="t" style="left:1330px;top:404.84px;letter-spacing:-0.422px;">Générale </span>
<span class="t" style="left:1379px;top:404.84px;letter-spacing:-0.180px;">#5</span>
<div class="f" style="left:1522px;top:402px;width:75px"></div>
<span class="t" style="left:1555.76px;top:404.84px;letter-spacing:0.000px;">0</span>
<div class="f" style="left:1603px;top:402px;width:74px"></div>
<span class="t" style="left:1636.26px;top:404.84px;letter-spacing:0.000px;">0</span>
<div class="f" style="left:1683px;top:402px;width:75px"></div>
<span class="t" style="left:1716.76px;top:404.84px;letter-spacing:0.000px;">0</span>
<div class="b" style="left:1764px;top:402px;width:112px"></div>
<span class="t" style="left:1792px;top:404.84px;letter-spacing:-0.005px;">Apprendre</span>
<span class="t" style="left:1292px;top:428.84px;letter-spacing:0.052px;">Config </span>
<span class="t" style="left:1330px;top:428.84px;letter-spacing:-0.422px;">Générale </span>
<span class="t" style="left:1379px;top:428.84px;letter-spacing:-0.180px;">#6</span>
<div class="f" style="left:1522px;top:426px;width:75px"></div>
<span class="t" style="left:1555.76px;top:428.84px;letter-spacing:0.000px;">0</span>
<div class="f" style="left:1603px;top:426px;width:74px"></div>
<span class="t" style="left:1636.26px;top:428.84px;letter-spacing:0.000px;">0</span>
<div class="f" style="left:1683px;top:426px;width:75px"></div>
<span class="t" style="left:1716.76px;top:428.84px;letter-spacing:0.000px;">0</span>
<div class="b" style="left:1764px;top:426px;width:112px"></div>
<span class="t" style="left:1792px;top:428.84px;letter-spacing:-0.005px;">Apprendre</span>
<span class="t" style="left:1292px;top:452.84px;letter-spacing:0.052px;">Config </span>
<span class="t" style="left:1330px;top:452.84px;letter-spacing:-0.422px;">Générale </span>
<span class="t" style="left:1379px;top:452.84px;letter-spacing:-0.180px;">#7</span>
<div class="f" style="left:1522px;top:450px;width:75px"></div>
<span class="t" style="left:1555.76px;top:452.84px;letter-spacing:0.000px;">0</span>
<div class="f" style="left:1603px;top:450px;width:74px"></div>
<span class="t" style="left:1636.26px;top:452.84px;letter-spacing:0.000px;">0</span>
<div class="f" style="left:1683px;top:450px;width:75px"></div>
<span class="t" style="left:1716.76px;top:452.84px;letter-spacing:0.000px;">0</span>
<div class="b" style="left:1764px;top:450px;width:112px"></div>
<span class="t" style="left:1792px;top:452.84px;letter-spacing:-0.005px;">Apprendre</span>
<span class="t" style="left:1292px;top:476.84px;letter-spacing:0.052px;">Config </span>
<span class="t" style="left:1330px;top:476.84px;letter-spacing:-0.422px;">Générale </span>
<span class="t" style="left:1379px;top:476.84px;letter-spacing:-0.180px;">#8</span>
<div class="f" style="left:1522px;top:474px;width:75px"></div>
<span class="t" style="left:1555.76px;top:476.84px;letter-spacing:0.000px;">0</span>
<div class="f" style="left:1603px;top:474px;width:74px"></div>
<span class="t" style="left:1636.26px;top:476.84px;letter-spacing:0.000px;">0</span>
<div class="f" style="left:1683px;top:474px;width:75px"></div>
<span class="t" style="left:1716.76px;top:476.84px;letter-spacing:0.000px;">0</span>
<div class="b" style="left:1764px;top:474px;width:112px"></div>
<span class="t" style="left:1792px;top:476.84px;letter-spacing:-0.005px;">Apprendre</span>
<span class="t" style="left:1292px;top:500.84px;letter-spacing:0.052px;">Config </span>
<span class="t" style="left:1330px;top:500.84px;letter-spacing:-0.422px;">Générale </span>
<span class="t" style="left:1379px;top:500.84px;letter-spacing:-0.180px;">#9</span>
<div class="f" style="left:1522px;top:498px;width:75px"></div>
<span class="t" style="left:1555.76px;top:500.84px;letter-spacing:0.000px;">0</span>
<div class="f" style="left:1603px;top:498px;width:74px"></div>
<span class="t" style="left:1636.26px;top:500.84px;letter-spacing:0.000px;">0</span>
<div class="f" style="left:1683px;top:498px;width:75px"></div>
<span class="t" style="left:1716.76px;top:500.84px;letter-spacing:0.000px;">0</span>
<div class="b" style="left:1764px;top:498px;width:112px"></div>
<span class="t" style="left:1792px;top:500.84px;letter-spacing:-0.005px;">Apprendre</span>
<span class="t" style="left:1292px;top:524.84px;letter-spacing:0.052px;">Config </span>
<span class="t" style="left:1330px;top:524.84px;letter-spacing:-0.422px;">Générale </span>
<span class="t" style="left:1379px;top:524.84px;letter-spacing:-0.344px;">#10</span>
<div class="f" style="left:1522px;top:522px;width:75px"></div>
<span class="t" style="left:1555.76px;top:524.84px;letter-spacing:0.000px;">0</span>
<div class="f" style="left:1603px;top:522px;width:74px"></div>
<span class="t" style="left:1636.26px;top:524.84px;letter-spacing:0.000px;">0</span>
<div class="f" style="left:1683px;top:522px;width:75px"></div>
<span class="t" style="left:1716.76px;top:524.84px;letter-spacing:0.000px;">0</span>
<div class="b" style="left:1764px;top:522px;width:112px"></div>
<span class="t" style="left:1792px;top:524.84px;letter-spacing:-0.005px;">Apprendre</span>
<span class="t" style="left:1292px;top:548.84px;letter-spacing:0.052px;">Config </span>
<span class="t" style="left:1330px;top:548.84px;letter-spacing:-0.422px;">Générale </span>
<span class="t" style="left:1379px;top:548.84px;letter-spacing:-0.047px;">#11</span>
<div class="f" style="left:1522px;top:546px;width:75px"></div>
<span class="t" style="left:1555.76px;top:548.84px;letter-spacing:0.000px;">0</span>
<div class="f" style="left:1603px;top:546px;width:74px"></div>
<span class="t" style="left:1636.26px;top:548.84px;letter-spacing:0.000px;">0</span>
<div class="f" style="left:1683px;top:546px;width:75px"></div>
<span class="t" style="left:1716.76px;top:548.84px;letter-spacing:0.000px;">0</span>
<div class="b" style="left:1764px;top:546px;width:112px"></div>
<span class="t" style="left:1792px;top:548.84px;letter-spacing:-0.005px;">Apprendre</span>
<span class="t" style="left:1292px;top:572.84px;letter-spacing:0.052px;">Config </span>
<span class="t" style="left:1330px;top:572.84px;letter-spacing:-0.422px;">Générale </span>
<span class="t" style="left:1379px;top:572.84px;letter-spacing:-0.344px;">#12</span>
<div class="f" style="left:1522px;top:570px;width:75px"></div>
<span class="t" style="left:1555.76px;top:572.84px;letter-spacing:0.000px;">0</span>
<div class="f" style="left:1603px;top:570px;width:74px"></div>
<span class="t" style="left:1636.26px;top:572.84px;letter-spacing:0.000px;">0</span>
<div class="f" style="left:1683px;top:570px;width:75px"></div>
<span class="t" style="left:1716.76px;top:572.84px;letter-spacing:0.000px;">0</span>
<div class="b" style="left:1764px;top:570px;width:112px"></div>
<span class="t" style="left:1792px;top:572.84px;letter-spacing:-0.005px;">Apprendre</span>
<span class="t" style="left:1292px;top:596.84px;letter-spacing:0.052px;">Config </span>
<span class="t" style="left:1330px;top:596.84px;letter-spacing:-0.422px;">Générale </span>
<span class="t" style="left:1379px;top:596.84px;letter-spacing:-0.344px;">#13</span>
<div class="f" style="left:1522px;top:594px;width:75px"></div>
<span class="t" style="left:1555.76px;top:596.84px;letter-spacing:0.000px;">0</span>
<div class="f" style="left:1603px;top:594px;width:74px"></div>
<span class="t" style="left:1636.26px;top:596.84px;letter-spacing:0.000px;">0</span>
<div class="f" style="left:1683px;top:594px;width:75px"></div>
<span class="t" style="left:1716.76px;top:596.84px;letter-spacing:0.000px;">0</span>
<div class="b" style="left:1764px;top:594px;width:112px"></div>
<span class="t" style="left:1792px;top:596.84px;letter-spacing:-0.005px;">Apprendre</span>
<span class="t" style="left:1292px;top:620.84px;letter-spacing:0.052px;">Config </span>
<span class="t" style="left:1330px;top:620.84px;letter-spacing:-0.422px;">Générale </span>
<span class="t" style="left:1379px;top:620.84px;letter-spacing:-0.344px;">#14</span>
<div class="f" style="left:1522px;top:618px;width:75px"></div>
<span class="t" style="left:1555.76px;top:620.84px;letter-spacing:0.000px;">0</span>
<div class="f" style="left:1603px;top:618px;width:74px"></div>
<span class="t" style="left:1636.26px;top:620.84px;letter-spacing:0.000px;">0</span>
<div class="f" style="left:1683px;top:618px;width:75px"></div>
<span class="t" style="left:1716.76px;top:620.84px;letter-spacing:0.000px;">0</span>
<div class="b" style="left:1764px;top:618px;width:112px"></div>
<span class="t" style="left:1792px;top:620.84px;letter-spacing:-0.005px;">Apprendre</span>
<div style="position:absolute;left:1522px;top:642px;width:75px;height:2px;background:#4b4b4b;"></div>
<div style="position:absolute;left:1603px;top:642px;width:74px;height:2px;background:#4b4b4b;"></div>
<div style="position:absolute;left:1683px;top:642px;width:75px;height:2px;background:#4b4b4b;"></div>
<div style="position:absolute;left:1764px;top:642px;width:112px;height:2px;overflow:hidden"><div class="b" style="left:0;top:0;width:112px"></div></div>
<svg style="position:absolute;left:1887px;top:295px" width="15" height="15" viewBox="0 0 15 15" shape-rendering="crispEdges">
<rect x="0" y="0" width="15" height="15" fill="#1e1029"/>
<rect x="1" y="1" width="13" height="1" fill="#fff"/><rect x="1" y="1" width="1" height="13" fill="#fff"/>
<rect x="13" y="1" width="1" height="13" fill="#a8a8a4"/><rect x="1" y="13" width="13" height="1" fill="#a8a8a4"/>
<rect x="14" y="0" width="1" height="15" fill="#6e6a66"/><rect x="0" y="14" width="15" height="1" fill="#6e6a66"/>
<rect x="6" y="5" width="1" height="1" fill="#fff"/><rect x="5" y="6" width="3" height="1" fill="#fff"/><rect x="4" y="7" width="5" height="1" fill="#fff"/></svg>
<svg style="position:absolute;left:1887px;top:629px" width="15" height="15" viewBox="0 0 15 15" shape-rendering="crispEdges">
<rect x="0" y="0" width="15" height="15" fill="#1e1029"/>
<rect x="1" y="1" width="13" height="1" fill="#fff"/><rect x="1" y="1" width="1" height="13" fill="#fff"/>
<rect x="13" y="1" width="1" height="13" fill="#a8a8a4"/><rect x="1" y="13" width="13" height="1" fill="#a8a8a4"/>
<rect x="14" y="0" width="1" height="15" fill="#6e6a66"/><rect x="0" y="14" width="15" height="1" fill="#6e6a66"/>
<rect x="4" y="5" width="5" height="1" fill="#fff"/><rect x="5" y="6" width="3" height="1" fill="#fff"/><rect x="6" y="7" width="1" height="1" fill="#fff"/></svg>
<div class="th" style="left:1887px;top:311px;width:15px;height:35px"></div>
<div class="ck" style="left:1887px;top:346px;width:15px;height:282px;"></div>
<div style="position:absolute;left:21px;top:651px;width:623px;height:350px;background:#1e1029;border:1px solid #3e7399"></div>
<span class="t" style="left:33px;top:665.84px;letter-spacing:0.324px;">+1/2 </span>
<span class="t" style="left:61px;top:665.84px;letter-spacing:0.438px;">ton </span>
<span class="t" style="left:82.5px;top:665.84px;letter-spacing:0.000px;">- </span>
<span class="t" style="left:90px;top:665.84px;letter-spacing:-0.004px;">Port </span>
<span class="t" style="left:114.66px;top:665.84px;letter-spacing:0.000px;">1</span>
<div class="f" style="left:263px;top:663px;width:75px"></div>
<span class="t" style="left:296.76px;top:665.84px;letter-spacing:0.000px;">0</span>
<div class="f" style="left:344px;top:663px;width:74px"></div>
<span class="t" style="left:377.26px;top:665.84px;letter-spacing:0.000px;">0</span>
<div class="f" style="left:424px;top:663px;width:75px"></div>
<span class="t" style="left:457.76px;top:665.84px;letter-spacing:0.000px;">0</span>
<div class="b" style="left:505px;top:663px;width:112px"></div>
<span class="t" style="left:533px;top:665.84px;letter-spacing:-0.005px;">Apprendre</span>
<span class="t" style="left:33px;top:689.84px;letter-spacing:0.328px;">-1/2 </span>
<span class="t" style="left:58px;top:689.84px;letter-spacing:0.438px;">ton </span>
<span class="t" style="left:79.5px;top:689.84px;letter-spacing:0.000px;">- </span>
<span class="t" style="left:87px;top:689.84px;letter-spacing:-0.004px;">Port </span>
<span class="t" style="left:111.66px;top:689.84px;letter-spacing:0.000px;">1</span>
<div class="f" style="left:263px;top:687px;width:75px"></div>
<span class="t" style="left:296.76px;top:689.84px;letter-spacing:0.000px;">0</span>
<div class="f" style="left:344px;top:687px;width:74px"></div>
<span class="t" style="left:377.26px;top:689.84px;letter-spacing:0.000px;">0</span>
<div class="f" style="left:424px;top:687px;width:75px"></div>
<span class="t" style="left:457.76px;top:689.84px;letter-spacing:0.000px;">0</span>
<div class="b" style="left:505px;top:687px;width:112px"></div>
<span class="t" style="left:533px;top:689.84px;letter-spacing:-0.005px;">Apprendre</span>
<span class="t" style="left:33px;top:713.84px;letter-spacing:0.156px;">+1 </span>
<span class="t" style="left:50px;top:713.84px;letter-spacing:0.438px;">ton </span>
<span class="t" style="left:71.5px;top:713.84px;letter-spacing:0.000px;">- </span>
<span class="t" style="left:79px;top:713.84px;letter-spacing:-0.004px;">Port </span>
<span class="t" style="left:103.66px;top:713.84px;letter-spacing:0.000px;">1</span>
<div class="f" style="left:263px;top:711px;width:75px"></div>
<span class="t" style="left:296.76px;top:713.84px;letter-spacing:0.000px;">0</span>
<div class="f" style="left:344px;top:711px;width:74px"></div>
<span class="t" style="left:377.26px;top:713.84px;letter-spacing:0.000px;">0</span>
<div class="f" style="left:424px;top:711px;width:75px"></div>
<span class="t" style="left:457.76px;top:713.84px;letter-spacing:0.000px;">0</span>
<div class="b" style="left:505px;top:711px;width:112px"></div>
<span class="t" style="left:533px;top:713.84px;letter-spacing:-0.005px;">Apprendre</span>
<span class="t" style="left:33px;top:737.84px;letter-spacing:0.164px;">-1 </span>
<span class="t" style="left:47px;top:737.84px;letter-spacing:0.438px;">ton </span>
<span class="t" style="left:68.5px;top:737.84px;letter-spacing:0.000px;">- </span>
<span class="t" style="left:76px;top:737.84px;letter-spacing:-0.004px;">Port </span>
<span class="t" style="left:100.66px;top:737.84px;letter-spacing:0.000px;">1</span>
<div class="f" style="left:263px;top:735px;width:75px"></div>
<span class="t" style="left:296.76px;top:737.84px;letter-spacing:0.000px;">0</span>
<div class="f" style="left:344px;top:735px;width:74px"></div>
<span class="t" style="left:377.26px;top:737.84px;letter-spacing:0.000px;">0</span>
<div class="f" style="left:424px;top:735px;width:75px"></div>
<span class="t" style="left:457.76px;top:737.84px;letter-spacing:0.000px;">0</span>
<div class="b" style="left:505px;top:735px;width:112px"></div>
<span class="t" style="left:533px;top:737.84px;letter-spacing:-0.005px;">Apprendre</span>
<span class="t" style="left:33px;top:761.84px;letter-spacing:-0.072px;">Notes </span>
<span class="t" style="left:67px;top:761.84px;letter-spacing:-0.586px;">User </span>
<span class="t" style="left:92.66px;top:761.84px;letter-spacing:0.000px;">1 </span>
<span class="t" style="left:102.5px;top:761.84px;letter-spacing:0.000px;">- </span>
<span class="t" style="left:110px;top:761.84px;letter-spacing:-0.004px;">Port </span>
<span class="t" style="left:134.66px;top:761.84px;letter-spacing:0.000px;">1</span>
<div class="f" style="left:263px;top:759px;width:75px"></div>
<span class="t" style="left:296.76px;top:761.84px;letter-spacing:0.000px;">0</span>
<div class="f" style="left:344px;top:759px;width:74px"></div>
<span class="t" style="left:377.26px;top:761.84px;letter-spacing:0.000px;">0</span>
<div class="f" style="left:424px;top:759px;width:75px"></div>
<span class="t" style="left:457.76px;top:761.84px;letter-spacing:0.000px;">0</span>
<div class="b" style="left:505px;top:759px;width:112px"></div>
<span class="t" style="left:533px;top:761.84px;letter-spacing:-0.005px;">Apprendre</span>
<span class="t" style="left:33px;top:785.84px;letter-spacing:-0.072px;">Notes </span>
<span class="t" style="left:67px;top:785.84px;letter-spacing:-0.586px;">User </span>
<span class="t" style="left:92.66px;top:785.84px;letter-spacing:0.000px;">2 </span>
<span class="t" style="left:102.5px;top:785.84px;letter-spacing:0.000px;">- </span>
<span class="t" style="left:110px;top:785.84px;letter-spacing:-0.004px;">Port </span>
<span class="t" style="left:134.66px;top:785.84px;letter-spacing:0.000px;">1</span>
<div class="f" style="left:263px;top:783px;width:75px"></div>
<span class="t" style="left:296.76px;top:785.84px;letter-spacing:0.000px;">0</span>
<div class="f" style="left:344px;top:783px;width:74px"></div>
<span class="t" style="left:377.26px;top:785.84px;letter-spacing:0.000px;">0</span>
<div class="f" style="left:424px;top:783px;width:75px"></div>
<span class="t" style="left:457.76px;top:785.84px;letter-spacing:0.000px;">0</span>
<div class="b" style="left:505px;top:783px;width:112px"></div>
<span class="t" style="left:533px;top:785.84px;letter-spacing:-0.005px;">Apprendre</span>
<span class="t" style="left:33px;top:809.84px;letter-spacing:-0.072px;">Notes </span>
<span class="t" style="left:67px;top:809.84px;letter-spacing:-0.586px;">User </span>
<span class="t" style="left:92.66px;top:809.84px;letter-spacing:0.000px;">3 </span>
<span class="t" style="left:102.5px;top:809.84px;letter-spacing:0.000px;">- </span>
<span class="t" style="left:110px;top:809.84px;letter-spacing:-0.004px;">Port </span>
<span class="t" style="left:134.66px;top:809.84px;letter-spacing:0.000px;">1</span>
<div class="f" style="left:263px;top:807px;width:75px"></div>
<span class="t" style="left:296.76px;top:809.84px;letter-spacing:0.000px;">0</span>
<div class="f" style="left:344px;top:807px;width:74px"></div>
<span class="t" style="left:377.26px;top:809.84px;letter-spacing:0.000px;">0</span>
<div class="f" style="left:424px;top:807px;width:75px"></div>
<span class="t" style="left:457.76px;top:809.84px;letter-spacing:0.000px;">0</span>
<div class="b" style="left:505px;top:807px;width:112px"></div>
<span class="t" style="left:533px;top:809.84px;letter-spacing:-0.005px;">Apprendre</span>
<span class="t" style="left:33px;top:833.84px;letter-spacing:0.324px;">+1/2 </span>
<span class="t" style="left:61px;top:833.84px;letter-spacing:0.438px;">ton </span>
<span class="t" style="left:82.5px;top:833.84px;letter-spacing:0.000px;">- </span>
<span class="t" style="left:90px;top:833.84px;letter-spacing:-0.004px;">Port </span>
<span class="t" style="left:114.66px;top:833.84px;letter-spacing:0.000px;">3</span>
<div class="f" style="left:263px;top:831px;width:75px"></div>
<span class="t" style="left:296.76px;top:833.84px;letter-spacing:0.000px;">0</span>
<div class="f" style="left:344px;top:831px;width:74px"></div>
<span class="t" style="left:377.26px;top:833.84px;letter-spacing:0.000px;">0</span>
<div class="f" style="left:424px;top:831px;width:75px"></div>
<span class="t" style="left:457.76px;top:833.84px;letter-spacing:0.000px;">0</span>
<div class="b" style="left:505px;top:831px;width:112px"></div>
<span class="t" style="left:533px;top:833.84px;letter-spacing:-0.005px;">Apprendre</span>
<span class="t" style="left:33px;top:857.84px;letter-spacing:0.328px;">-1/2 </span>
<span class="t" style="left:58px;top:857.84px;letter-spacing:0.438px;">ton </span>
<span class="t" style="left:79.5px;top:857.84px;letter-spacing:0.000px;">- </span>
<span class="t" style="left:87px;top:857.84px;letter-spacing:-0.004px;">Port </span>
<span class="t" style="left:111.66px;top:857.84px;letter-spacing:0.000px;">3</span>
<div class="f" style="left:263px;top:855px;width:75px"></div>
<span class="t" style="left:296.76px;top:857.84px;letter-spacing:0.000px;">0</span>
<div class="f" style="left:344px;top:855px;width:74px"></div>
<span class="t" style="left:377.26px;top:857.84px;letter-spacing:0.000px;">0</span>
<div class="f" style="left:424px;top:855px;width:75px"></div>
<span class="t" style="left:457.76px;top:857.84px;letter-spacing:0.000px;">0</span>
<div class="b" style="left:505px;top:855px;width:112px"></div>
<span class="t" style="left:533px;top:857.84px;letter-spacing:-0.005px;">Apprendre</span>
<span class="t" style="left:33px;top:881.84px;letter-spacing:0.156px;">+1 </span>
<span class="t" style="left:50px;top:881.84px;letter-spacing:0.438px;">ton </span>
<span class="t" style="left:71.5px;top:881.84px;letter-spacing:0.000px;">- </span>
<span class="t" style="left:79px;top:881.84px;letter-spacing:-0.004px;">Port </span>
<span class="t" style="left:103.66px;top:881.84px;letter-spacing:0.000px;">3</span>
<div class="f" style="left:263px;top:879px;width:75px"></div>
<span class="t" style="left:296.76px;top:881.84px;letter-spacing:0.000px;">0</span>
<div class="f" style="left:344px;top:879px;width:74px"></div>
<span class="t" style="left:377.26px;top:881.84px;letter-spacing:0.000px;">0</span>
<div class="f" style="left:424px;top:879px;width:75px"></div>
<span class="t" style="left:457.76px;top:881.84px;letter-spacing:0.000px;">0</span>
<div class="b" style="left:505px;top:879px;width:112px"></div>
<span class="t" style="left:533px;top:881.84px;letter-spacing:-0.005px;">Apprendre</span>
<span class="t" style="left:33px;top:905.84px;letter-spacing:0.164px;">-1 </span>
<span class="t" style="left:47px;top:905.84px;letter-spacing:0.438px;">ton </span>
<span class="t" style="left:68.5px;top:905.84px;letter-spacing:0.000px;">- </span>
<span class="t" style="left:76px;top:905.84px;letter-spacing:-0.004px;">Port </span>
<span class="t" style="left:100.66px;top:905.84px;letter-spacing:0.000px;">3</span>
<div class="f" style="left:263px;top:903px;width:75px"></div>
<span class="t" style="left:296.76px;top:905.84px;letter-spacing:0.000px;">0</span>
<div class="f" style="left:344px;top:903px;width:74px"></div>
<span class="t" style="left:377.26px;top:905.84px;letter-spacing:0.000px;">0</span>
<div class="f" style="left:424px;top:903px;width:75px"></div>
<span class="t" style="left:457.76px;top:905.84px;letter-spacing:0.000px;">0</span>
<div class="b" style="left:505px;top:903px;width:112px"></div>
<span class="t" style="left:533px;top:905.84px;letter-spacing:-0.005px;">Apprendre</span>
<span class="t" style="left:33px;top:929.84px;letter-spacing:-0.072px;">Notes </span>
<span class="t" style="left:67px;top:929.84px;letter-spacing:-0.586px;">User </span>
<span class="t" style="left:92.66px;top:929.84px;letter-spacing:0.000px;">1 </span>
<span class="t" style="left:102.5px;top:929.84px;letter-spacing:0.000px;">- </span>
<span class="t" style="left:110px;top:929.84px;letter-spacing:-0.004px;">Port </span>
<span class="t" style="left:134.66px;top:929.84px;letter-spacing:0.000px;">3</span>
<div class="f" style="left:263px;top:927px;width:75px"></div>
<span class="t" style="left:296.76px;top:929.84px;letter-spacing:0.000px;">0</span>
<div class="f" style="left:344px;top:927px;width:74px"></div>
<span class="t" style="left:377.26px;top:929.84px;letter-spacing:0.000px;">0</span>
<div class="f" style="left:424px;top:927px;width:75px"></div>
<span class="t" style="left:457.76px;top:929.84px;letter-spacing:0.000px;">0</span>
<div class="b" style="left:505px;top:927px;width:112px"></div>
<span class="t" style="left:533px;top:929.84px;letter-spacing:-0.005px;">Apprendre</span>
<span class="t" style="left:33px;top:953.84px;letter-spacing:-0.072px;">Notes </span>
<span class="t" style="left:67px;top:953.84px;letter-spacing:-0.586px;">User </span>
<span class="t" style="left:92.66px;top:953.84px;letter-spacing:0.000px;">2 </span>
<span class="t" style="left:102.5px;top:953.84px;letter-spacing:0.000px;">- </span>
<span class="t" style="left:110px;top:953.84px;letter-spacing:-0.004px;">Port </span>
<span class="t" style="left:134.66px;top:953.84px;letter-spacing:0.000px;">3</span>
<div class="f" style="left:263px;top:951px;width:75px"></div>
<span class="t" style="left:296.76px;top:953.84px;letter-spacing:0.000px;">0</span>
<div class="f" style="left:344px;top:951px;width:74px"></div>
<span class="t" style="left:377.26px;top:953.84px;letter-spacing:0.000px;">0</span>
<div class="f" style="left:424px;top:951px;width:75px"></div>
<span class="t" style="left:457.76px;top:953.84px;letter-spacing:0.000px;">0</span>
<div class="b" style="left:505px;top:951px;width:112px"></div>
<span class="t" style="left:533px;top:953.84px;letter-spacing:-0.005px;">Apprendre</span>
<span class="t" style="left:33px;top:977.84px;letter-spacing:-0.072px;">Notes </span>
<span class="t" style="left:67px;top:977.84px;letter-spacing:-0.586px;">User </span>
<span class="t" style="left:92.66px;top:977.84px;letter-spacing:0.000px;">3 </span>
<span class="t" style="left:102.5px;top:977.84px;letter-spacing:0.000px;">- </span>
<span class="t" style="left:110px;top:977.84px;letter-spacing:-0.004px;">Port </span>
<span class="t" style="left:134.66px;top:977.84px;letter-spacing:0.000px;">3</span>
<div class="f" style="left:263px;top:975px;width:75px"></div>
<span class="t" style="left:296.76px;top:977.84px;letter-spacing:0.000px;">0</span>
<div class="f" style="left:344px;top:975px;width:74px"></div>
<span class="t" style="left:377.26px;top:977.84px;letter-spacing:0.000px;">0</span>
<div class="f" style="left:424px;top:975px;width:75px"></div>
<span class="t" style="left:457.76px;top:977.84px;letter-spacing:0.000px;">0</span>
<div class="b" style="left:505px;top:975px;width:112px"></div>
<span class="t" style="left:533px;top:977.84px;letter-spacing:-0.005px;">Apprendre</span>
<div style="position:absolute;left:263px;top:999px;width:75px;height:1px;background:#4b4b4b;"></div>
<div style="position:absolute;left:344px;top:999px;width:74px;height:1px;background:#4b4b4b;"></div>
<div style="position:absolute;left:424px;top:999px;width:75px;height:1px;background:#4b4b4b;"></div>
<div style="position:absolute;left:507px;top:999px;width:108px;height:1px;background:#8a86f6;"></div>
<svg style="position:absolute;left:628px;top:652px" width="15" height="15" viewBox="0 0 15 15" shape-rendering="crispEdges">
<rect x="0" y="0" width="15" height="15" fill="#1e1029"/>
<rect x="1" y="1" width="13" height="1" fill="#fff"/><rect x="1" y="1" width="1" height="13" fill="#fff"/>
<rect x="13" y="1" width="1" height="13" fill="#a8a8a4"/><rect x="1" y="13" width="13" height="1" fill="#a8a8a4"/>
<rect x="14" y="0" width="1" height="15" fill="#6e6a66"/><rect x="0" y="14" width="15" height="1" fill="#6e6a66"/>
<rect x="6" y="5" width="1" height="1" fill="#fff"/><rect x="5" y="6" width="3" height="1" fill="#fff"/><rect x="4" y="7" width="5" height="1" fill="#fff"/></svg>
<svg style="position:absolute;left:628px;top:985px" width="15" height="15" viewBox="0 0 15 15" shape-rendering="crispEdges">
<rect x="0" y="0" width="15" height="15" fill="#1e1029"/>
<rect x="1" y="1" width="13" height="1" fill="#fff"/><rect x="1" y="1" width="1" height="13" fill="#fff"/>
<rect x="13" y="1" width="1" height="13" fill="#a8a8a4"/><rect x="1" y="13" width="13" height="1" fill="#a8a8a4"/>
<rect x="14" y="0" width="1" height="15" fill="#6e6a66"/><rect x="0" y="14" width="15" height="1" fill="#6e6a66"/>
<rect x="4" y="5" width="5" height="1" fill="#fff"/><rect x="5" y="6" width="3" height="1" fill="#fff"/><rect x="6" y="7" width="1" height="1" fill="#fff"/></svg>
<div class="th" style="left:628px;top:668px;width:15px;height:211px"></div>
<div class="ck" style="left:628px;top:879px;width:15px;height:105px;"></div>
<div style="position:absolute;left:650px;top:651px;width:624px;height:350px;background:#1e1029;border:1px solid #3e7399"></div>
<span class="t" style="left:662px;top:665.84px;letter-spacing:-0.448px;">Preset </span>
<span class="t" style="left:697px;top:665.84px;letter-spacing:-0.180px;">de </span>
<span class="t" style="left:713px;top:665.84px;letter-spacing:-0.072px;">Notes </span>
<span class="t" style="left:747px;top:665.84px;letter-spacing:-0.180px;">#1 </span>
<span class="t" style="left:763.5px;top:665.84px;letter-spacing:0.000px;">- </span>
<span class="t" style="left:771px;top:665.84px;letter-spacing:-0.004px;">Port </span>
<span class="t" style="left:795.66px;top:665.84px;letter-spacing:0.000px;">1</span>
<div class="f" style="left:892px;top:663px;width:75px"></div>
<span class="t" style="left:925.76px;top:665.84px;letter-spacing:0.000px;">0</span>
<div class="f" style="left:973px;top:663px;width:75px"></div>
<span class="t" style="left:1006.76px;top:665.84px;letter-spacing:0.000px;">0</span>
<div class="f" style="left:1054px;top:663px;width:75px"></div>
<span class="t" style="left:1087.76px;top:665.84px;letter-spacing:0.000px;">0</span>
<div class="b" style="left:1135px;top:663px;width:112px"></div>
<span class="t" style="left:1163px;top:665.84px;letter-spacing:-0.005px;">Apprendre</span>
<span class="t" style="left:662px;top:689.84px;letter-spacing:-0.448px;">Preset </span>
<span class="t" style="left:697px;top:689.84px;letter-spacing:-0.180px;">de </span>
<span class="t" style="left:713px;top:689.84px;letter-spacing:-0.072px;">Notes </span>
<span class="t" style="left:747px;top:689.84px;letter-spacing:-0.180px;">#2 </span>
<span class="t" style="left:763.5px;top:689.84px;letter-spacing:0.000px;">- </span>
<span class="t" style="left:771px;top:689.84px;letter-spacing:-0.004px;">Port </span>
<span class="t" style="left:795.66px;top:689.84px;letter-spacing:0.000px;">1</span>
<div class="f" style="left:892px;top:687px;width:75px"></div>
<span class="t" style="left:925.76px;top:689.84px;letter-spacing:0.000px;">0</span>
<div class="f" style="left:973px;top:687px;width:75px"></div>
<span class="t" style="left:1006.76px;top:689.84px;letter-spacing:0.000px;">0</span>
<div class="f" style="left:1054px;top:687px;width:75px"></div>
<span class="t" style="left:1087.76px;top:689.84px;letter-spacing:0.000px;">0</span>
<div class="b" style="left:1135px;top:687px;width:112px"></div>
<span class="t" style="left:1163px;top:689.84px;letter-spacing:-0.005px;">Apprendre</span>
<span class="t" style="left:662px;top:713.84px;letter-spacing:-0.448px;">Preset </span>
<span class="t" style="left:697px;top:713.84px;letter-spacing:-0.180px;">de </span>
<span class="t" style="left:713px;top:713.84px;letter-spacing:-0.072px;">Notes </span>
<span class="t" style="left:747px;top:713.84px;letter-spacing:-0.180px;">#3 </span>
<span class="t" style="left:763.5px;top:713.84px;letter-spacing:0.000px;">- </span>
<span class="t" style="left:771px;top:713.84px;letter-spacing:-0.004px;">Port </span>
<span class="t" style="left:795.66px;top:713.84px;letter-spacing:0.000px;">1</span>
<div class="f" style="left:892px;top:711px;width:75px"></div>
<span class="t" style="left:925.76px;top:713.84px;letter-spacing:0.000px;">0</span>
<div class="f" style="left:973px;top:711px;width:75px"></div>
<span class="t" style="left:1006.76px;top:713.84px;letter-spacing:0.000px;">0</span>
<div class="f" style="left:1054px;top:711px;width:75px"></div>
<span class="t" style="left:1087.76px;top:713.84px;letter-spacing:0.000px;">0</span>
<div class="b" style="left:1135px;top:711px;width:112px"></div>
<span class="t" style="left:1163px;top:713.84px;letter-spacing:-0.005px;">Apprendre</span>
<span class="t" style="left:662px;top:737.84px;letter-spacing:-0.448px;">Preset </span>
<span class="t" style="left:697px;top:737.84px;letter-spacing:-0.180px;">de </span>
<span class="t" style="left:713px;top:737.84px;letter-spacing:-0.072px;">Notes </span>
<span class="t" style="left:747px;top:737.84px;letter-spacing:-0.180px;">#4 </span>
<span class="t" style="left:763.5px;top:737.84px;letter-spacing:0.000px;">- </span>
<span class="t" style="left:771px;top:737.84px;letter-spacing:-0.004px;">Port </span>
<span class="t" style="left:795.66px;top:737.84px;letter-spacing:0.000px;">1</span>
<div class="f" style="left:892px;top:735px;width:75px"></div>
<span class="t" style="left:925.76px;top:737.84px;letter-spacing:0.000px;">0</span>
<div class="f" style="left:973px;top:735px;width:75px"></div>
<span class="t" style="left:1006.76px;top:737.84px;letter-spacing:0.000px;">0</span>
<div class="f" style="left:1054px;top:735px;width:75px"></div>
<span class="t" style="left:1087.76px;top:737.84px;letter-spacing:0.000px;">0</span>
<div class="b" style="left:1135px;top:735px;width:112px"></div>
<span class="t" style="left:1163px;top:737.84px;letter-spacing:-0.005px;">Apprendre</span>
<span class="t" style="left:662px;top:761.84px;letter-spacing:-0.448px;">Preset </span>
<span class="t" style="left:697px;top:761.84px;letter-spacing:-0.180px;">de </span>
<span class="t" style="left:713px;top:761.84px;letter-spacing:-0.072px;">Notes </span>
<span class="t" style="left:747px;top:761.84px;letter-spacing:-0.180px;">#5 </span>
<span class="t" style="left:763.5px;top:761.84px;letter-spacing:0.000px;">- </span>
<span class="t" style="left:771px;top:761.84px;letter-spacing:-0.004px;">Port </span>
<span class="t" style="left:795.66px;top:761.84px;letter-spacing:0.000px;">1</span>
<div class="f" style="left:892px;top:759px;width:75px"></div>
<span class="t" style="left:925.76px;top:761.84px;letter-spacing:0.000px;">0</span>
<div class="f" style="left:973px;top:759px;width:75px"></div>
<span class="t" style="left:1006.76px;top:761.84px;letter-spacing:0.000px;">0</span>
<div class="f" style="left:1054px;top:759px;width:75px"></div>
<span class="t" style="left:1087.76px;top:761.84px;letter-spacing:0.000px;">0</span>
<div class="b" style="left:1135px;top:759px;width:112px"></div>
<span class="t" style="left:1163px;top:761.84px;letter-spacing:-0.005px;">Apprendre</span>
<span class="t" style="left:662px;top:785.84px;letter-spacing:-0.448px;">Preset </span>
<span class="t" style="left:697px;top:785.84px;letter-spacing:-0.180px;">de </span>
<span class="t" style="left:713px;top:785.84px;letter-spacing:-0.072px;">Notes </span>
<span class="t" style="left:747px;top:785.84px;letter-spacing:-0.180px;">#6 </span>
<span class="t" style="left:763.5px;top:785.84px;letter-spacing:0.000px;">- </span>
<span class="t" style="left:771px;top:785.84px;letter-spacing:-0.004px;">Port </span>
<span class="t" style="left:795.66px;top:785.84px;letter-spacing:0.000px;">1</span>
<div class="f" style="left:892px;top:783px;width:75px"></div>
<span class="t" style="left:925.76px;top:785.84px;letter-spacing:0.000px;">0</span>
<div class="f" style="left:973px;top:783px;width:75px"></div>
<span class="t" style="left:1006.76px;top:785.84px;letter-spacing:0.000px;">0</span>
<div class="f" style="left:1054px;top:783px;width:75px"></div>
<span class="t" style="left:1087.76px;top:785.84px;letter-spacing:0.000px;">0</span>
<div class="b" style="left:1135px;top:783px;width:112px"></div>
<span class="t" style="left:1163px;top:785.84px;letter-spacing:-0.005px;">Apprendre</span>
<span class="t" style="left:662px;top:809.84px;letter-spacing:-0.448px;">Preset </span>
<span class="t" style="left:697px;top:809.84px;letter-spacing:-0.180px;">de </span>
<span class="t" style="left:713px;top:809.84px;letter-spacing:-0.072px;">Notes </span>
<span class="t" style="left:747px;top:809.84px;letter-spacing:-0.180px;">#7 </span>
<span class="t" style="left:763.5px;top:809.84px;letter-spacing:0.000px;">- </span>
<span class="t" style="left:771px;top:809.84px;letter-spacing:-0.004px;">Port </span>
<span class="t" style="left:795.66px;top:809.84px;letter-spacing:0.000px;">1</span>
<div class="f" style="left:892px;top:807px;width:75px"></div>
<span class="t" style="left:925.76px;top:809.84px;letter-spacing:0.000px;">0</span>
<div class="f" style="left:973px;top:807px;width:75px"></div>
<span class="t" style="left:1006.76px;top:809.84px;letter-spacing:0.000px;">0</span>
<div class="f" style="left:1054px;top:807px;width:75px"></div>
<span class="t" style="left:1087.76px;top:809.84px;letter-spacing:0.000px;">0</span>
<div class="b" style="left:1135px;top:807px;width:112px"></div>
<span class="t" style="left:1163px;top:809.84px;letter-spacing:-0.005px;">Apprendre</span>
<span class="t" style="left:662px;top:833.84px;letter-spacing:-0.448px;">Preset </span>
<span class="t" style="left:697px;top:833.84px;letter-spacing:-0.180px;">de </span>
<span class="t" style="left:713px;top:833.84px;letter-spacing:-0.072px;">Notes </span>
<span class="t" style="left:747px;top:833.84px;letter-spacing:-0.180px;">#8 </span>
<span class="t" style="left:763.5px;top:833.84px;letter-spacing:0.000px;">- </span>
<span class="t" style="left:771px;top:833.84px;letter-spacing:-0.004px;">Port </span>
<span class="t" style="left:795.66px;top:833.84px;letter-spacing:0.000px;">1</span>
<div class="f" style="left:892px;top:831px;width:75px"></div>
<span class="t" style="left:925.76px;top:833.84px;letter-spacing:0.000px;">0</span>
<div class="f" style="left:973px;top:831px;width:75px"></div>
<span class="t" style="left:1006.76px;top:833.84px;letter-spacing:0.000px;">0</span>
<div class="f" style="left:1054px;top:831px;width:75px"></div>
<span class="t" style="left:1087.76px;top:833.84px;letter-spacing:0.000px;">0</span>
<div class="b" style="left:1135px;top:831px;width:112px"></div>
<span class="t" style="left:1163px;top:833.84px;letter-spacing:-0.005px;">Apprendre</span>
<span class="t" style="left:662px;top:857.84px;letter-spacing:-0.448px;">Preset </span>
<span class="t" style="left:697px;top:857.84px;letter-spacing:-0.180px;">de </span>
<span class="t" style="left:713px;top:857.84px;letter-spacing:-0.072px;">Notes </span>
<span class="t" style="left:747px;top:857.84px;letter-spacing:-0.180px;">#9 </span>
<span class="t" style="left:763.5px;top:857.84px;letter-spacing:0.000px;">- </span>
<span class="t" style="left:771px;top:857.84px;letter-spacing:-0.004px;">Port </span>
<span class="t" style="left:795.66px;top:857.84px;letter-spacing:0.000px;">1</span>
<div class="f" style="left:892px;top:855px;width:75px"></div>
<span class="t" style="left:925.76px;top:857.84px;letter-spacing:0.000px;">0</span>
<div class="f" style="left:973px;top:855px;width:75px"></div>
<span class="t" style="left:1006.76px;top:857.84px;letter-spacing:0.000px;">0</span>
<div class="f" style="left:1054px;top:855px;width:75px"></div>
<span class="t" style="left:1087.76px;top:857.84px;letter-spacing:0.000px;">0</span>
<div class="b" style="left:1135px;top:855px;width:112px"></div>
<span class="t" style="left:1163px;top:857.84px;letter-spacing:-0.005px;">Apprendre</span>
<span class="t" style="left:662px;top:881.84px;letter-spacing:-0.448px;">Preset </span>
<span class="t" style="left:697px;top:881.84px;letter-spacing:-0.180px;">de </span>
<span class="t" style="left:713px;top:881.84px;letter-spacing:-0.072px;">Notes </span>
<span class="t" style="left:747px;top:881.84px;letter-spacing:-0.344px;">#10 </span>
<span class="t" style="left:769.5px;top:881.84px;letter-spacing:0.000px;">- </span>
<span class="t" style="left:777px;top:881.84px;letter-spacing:-0.004px;">Port </span>
<span class="t" style="left:801.66px;top:881.84px;letter-spacing:0.000px;">1</span>
<div class="f" style="left:892px;top:879px;width:75px"></div>
<span class="t" style="left:925.76px;top:881.84px;letter-spacing:0.000px;">0</span>
<div class="f" style="left:973px;top:879px;width:75px"></div>
<span class="t" style="left:1006.76px;top:881.84px;letter-spacing:0.000px;">0</span>
<div class="f" style="left:1054px;top:879px;width:75px"></div>
<span class="t" style="left:1087.76px;top:881.84px;letter-spacing:0.000px;">0</span>
<div class="b" style="left:1135px;top:879px;width:112px"></div>
<span class="t" style="left:1163px;top:881.84px;letter-spacing:-0.005px;">Apprendre</span>
<span class="t" style="left:662px;top:905.84px;letter-spacing:-0.448px;">Preset </span>
<span class="t" style="left:697px;top:905.84px;letter-spacing:-0.180px;">de </span>
<span class="t" style="left:713px;top:905.84px;letter-spacing:-0.072px;">Notes </span>
<span class="t" style="left:747px;top:905.84px;letter-spacing:-0.047px;">#11 </span>
<span class="t" style="left:769.5px;top:905.84px;letter-spacing:0.000px;">- </span>
<span class="t" style="left:777px;top:905.84px;letter-spacing:-0.004px;">Port </span>
<span class="t" style="left:801.66px;top:905.84px;letter-spacing:0.000px;">1</span>
<div class="f" style="left:892px;top:903px;width:75px"></div>
<span class="t" style="left:925.76px;top:905.84px;letter-spacing:0.000px;">0</span>
<div class="f" style="left:973px;top:903px;width:75px"></div>
<span class="t" style="left:1006.76px;top:905.84px;letter-spacing:0.000px;">0</span>
<div class="f" style="left:1054px;top:903px;width:75px"></div>
<span class="t" style="left:1087.76px;top:905.84px;letter-spacing:0.000px;">0</span>
<div class="b" style="left:1135px;top:903px;width:112px"></div>
<span class="t" style="left:1163px;top:905.84px;letter-spacing:-0.005px;">Apprendre</span>
<span class="t" style="left:662px;top:929.84px;letter-spacing:-0.448px;">Preset </span>
<span class="t" style="left:697px;top:929.84px;letter-spacing:-0.180px;">de </span>
<span class="t" style="left:713px;top:929.84px;letter-spacing:-0.072px;">Notes </span>
<span class="t" style="left:747px;top:929.84px;letter-spacing:-0.344px;">#12 </span>
<span class="t" style="left:769.5px;top:929.84px;letter-spacing:0.000px;">- </span>
<span class="t" style="left:777px;top:929.84px;letter-spacing:-0.004px;">Port </span>
<span class="t" style="left:801.66px;top:929.84px;letter-spacing:0.000px;">1</span>
<div class="f" style="left:892px;top:927px;width:75px"></div>
<span class="t" style="left:925.76px;top:929.84px;letter-spacing:0.000px;">0</span>
<div class="f" style="left:973px;top:927px;width:75px"></div>
<span class="t" style="left:1006.76px;top:929.84px;letter-spacing:0.000px;">0</span>
<div class="f" style="left:1054px;top:927px;width:75px"></div>
<span class="t" style="left:1087.76px;top:929.84px;letter-spacing:0.000px;">0</span>
<div class="b" style="left:1135px;top:927px;width:112px"></div>
<span class="t" style="left:1163px;top:929.84px;letter-spacing:-0.005px;">Apprendre</span>
<span class="t" style="left:662px;top:953.84px;letter-spacing:-0.448px;">Preset </span>
<span class="t" style="left:697px;top:953.84px;letter-spacing:-0.180px;">de </span>
<span class="t" style="left:713px;top:953.84px;letter-spacing:-0.072px;">Notes </span>
<span class="t" style="left:747px;top:953.84px;letter-spacing:-0.344px;">#13 </span>
<span class="t" style="left:769.5px;top:953.84px;letter-spacing:0.000px;">- </span>
<span class="t" style="left:777px;top:953.84px;letter-spacing:-0.004px;">Port </span>
<span class="t" style="left:801.66px;top:953.84px;letter-spacing:0.000px;">1</span>
<div class="f" style="left:892px;top:951px;width:75px"></div>
<span class="t" style="left:925.76px;top:953.84px;letter-spacing:0.000px;">0</span>
<div class="f" style="left:973px;top:951px;width:75px"></div>
<span class="t" style="left:1006.76px;top:953.84px;letter-spacing:0.000px;">0</span>
<div class="f" style="left:1054px;top:951px;width:75px"></div>
<span class="t" style="left:1087.76px;top:953.84px;letter-spacing:0.000px;">0</span>
<div class="b" style="left:1135px;top:951px;width:112px"></div>
<span class="t" style="left:1163px;top:953.84px;letter-spacing:-0.005px;">Apprendre</span>
<span class="t" style="left:662px;top:977.84px;letter-spacing:-0.448px;">Preset </span>
<span class="t" style="left:697px;top:977.84px;letter-spacing:-0.180px;">de </span>
<span class="t" style="left:713px;top:977.84px;letter-spacing:-0.072px;">Notes </span>
<span class="t" style="left:747px;top:977.84px;letter-spacing:-0.344px;">#14 </span>
<span class="t" style="left:769.5px;top:977.84px;letter-spacing:0.000px;">- </span>
<span class="t" style="left:777px;top:977.84px;letter-spacing:-0.004px;">Port </span>
<span class="t" style="left:801.66px;top:977.84px;letter-spacing:0.000px;">1</span>
<div class="f" style="left:892px;top:975px;width:75px"></div>
<span class="t" style="left:925.76px;top:977.84px;letter-spacing:0.000px;">0</span>
<div class="f" style="left:973px;top:975px;width:75px"></div>
<span class="t" style="left:1006.76px;top:977.84px;letter-spacing:0.000px;">0</span>
<div class="f" style="left:1054px;top:975px;width:75px"></div>
<span class="t" style="left:1087.76px;top:977.84px;letter-spacing:0.000px;">0</span>
<div class="b" style="left:1135px;top:975px;width:112px"></div>
<span class="t" style="left:1163px;top:977.84px;letter-spacing:-0.005px;">Apprendre</span>
<div style="position:absolute;left:892px;top:999px;width:75px;height:1px;background:#4b4b4b;"></div>
<div style="position:absolute;left:973px;top:999px;width:75px;height:1px;background:#4b4b4b;"></div>
<div style="position:absolute;left:1054px;top:999px;width:75px;height:1px;background:#4b4b4b;"></div>
<div style="position:absolute;left:1137px;top:999px;width:108px;height:1px;background:#8a86f6;"></div>
<svg style="position:absolute;left:1258px;top:652px" width="15" height="15" viewBox="0 0 15 15" shape-rendering="crispEdges">
<rect x="0" y="0" width="15" height="15" fill="#1e1029"/>
<rect x="1" y="1" width="13" height="1" fill="#fff"/><rect x="1" y="1" width="1" height="13" fill="#fff"/>
<rect x="13" y="1" width="1" height="13" fill="#a8a8a4"/><rect x="1" y="13" width="13" height="1" fill="#a8a8a4"/>
<rect x="14" y="0" width="1" height="15" fill="#6e6a66"/><rect x="0" y="14" width="15" height="1" fill="#6e6a66"/>
<rect x="6" y="5" width="1" height="1" fill="#fff"/><rect x="5" y="6" width="3" height="1" fill="#fff"/><rect x="4" y="7" width="5" height="1" fill="#fff"/></svg>
<svg style="position:absolute;left:1258px;top:985px" width="15" height="15" viewBox="0 0 15 15" shape-rendering="crispEdges">
<rect x="0" y="0" width="15" height="15" fill="#1e1029"/>
<rect x="1" y="1" width="13" height="1" fill="#fff"/><rect x="1" y="1" width="1" height="13" fill="#fff"/>
<rect x="13" y="1" width="1" height="13" fill="#a8a8a4"/><rect x="1" y="13" width="13" height="1" fill="#a8a8a4"/>
<rect x="14" y="0" width="1" height="15" fill="#6e6a66"/><rect x="0" y="14" width="15" height="1" fill="#6e6a66"/>
<rect x="4" y="5" width="5" height="1" fill="#fff"/><rect x="5" y="6" width="3" height="1" fill="#fff"/><rect x="6" y="7" width="1" height="1" fill="#fff"/></svg>
<div class="th" style="left:1258px;top:668px;width:15px;height:11px"></div>
<div class="ck" style="left:1258px;top:679px;width:15px;height:305px;"></div>
<div style="position:absolute;left:1280px;top:651px;width:623px;height:350px;background:#1e1029;border:1px solid #3e7399"></div>
<span class="t" style="left:1292px;top:665.84px;letter-spacing:-0.290px;">Envoyer </span>
<span class="t" style="left:1337px;top:665.84px;letter-spacing:-0.172px;">la </span>
<span class="t" style="left:1349px;top:665.84px;letter-spacing:0.160px;">Note </span>
<span class="t" style="left:1377.66px;top:665.84px;letter-spacing:0.000px;">1 </span>
<span class="t" style="left:1387.5px;top:665.84px;letter-spacing:0.000px;">- </span>
<span class="t" style="left:1395px;top:665.84px;letter-spacing:-0.004px;">Port </span>
<span class="t" style="left:1419.66px;top:665.84px;letter-spacing:0.000px;">1</span>
<div class="f" style="left:1522px;top:663px;width:75px"></div>
<span class="t" style="left:1555.76px;top:665.84px;letter-spacing:0.000px;">0</span>
<div class="f" style="left:1603px;top:663px;width:74px"></div>
<span class="t" style="left:1636.26px;top:665.84px;letter-spacing:0.000px;">0</span>
<div class="f" style="left:1683px;top:663px;width:75px"></div>
<span class="t" style="left:1716.76px;top:665.84px;letter-spacing:0.000px;">0</span>
<div class="b" style="left:1764px;top:663px;width:112px"></div>
<span class="t" style="left:1792px;top:665.84px;letter-spacing:-0.005px;">Apprendre</span>
<span class="t" style="left:1292px;top:689.84px;letter-spacing:-0.290px;">Envoyer </span>
<span class="t" style="left:1337px;top:689.84px;letter-spacing:-0.172px;">la </span>
<span class="t" style="left:1349px;top:689.84px;letter-spacing:0.160px;">Note </span>
<span class="t" style="left:1377.66px;top:689.84px;letter-spacing:0.000px;">2 </span>
<span class="t" style="left:1387.5px;top:689.84px;letter-spacing:0.000px;">- </span>
<span class="t" style="left:1395px;top:689.84px;letter-spacing:-0.004px;">Port </span>
<span class="t" style="left:1419.66px;top:689.84px;letter-spacing:0.000px;">1</span>
<div class="f" style="left:1522px;top:687px;width:75px"></div>
<span class="t" style="left:1555.76px;top:689.84px;letter-spacing:0.000px;">0</span>
<div class="f" style="left:1603px;top:687px;width:74px"></div>
<span class="t" style="left:1636.26px;top:689.84px;letter-spacing:0.000px;">0</span>
<div class="f" style="left:1683px;top:687px;width:75px"></div>
<span class="t" style="left:1716.76px;top:689.84px;letter-spacing:0.000px;">0</span>
<div class="b" style="left:1764px;top:687px;width:112px"></div>
<span class="t" style="left:1792px;top:689.84px;letter-spacing:-0.005px;">Apprendre</span>
<span class="t" style="left:1292px;top:713.84px;letter-spacing:-0.290px;">Envoyer </span>
<span class="t" style="left:1337px;top:713.84px;letter-spacing:-0.172px;">la </span>
<span class="t" style="left:1349px;top:713.84px;letter-spacing:0.160px;">Note </span>
<span class="t" style="left:1377.66px;top:713.84px;letter-spacing:0.000px;">3 </span>
<span class="t" style="left:1387.5px;top:713.84px;letter-spacing:0.000px;">- </span>
<span class="t" style="left:1395px;top:713.84px;letter-spacing:-0.004px;">Port </span>
<span class="t" style="left:1419.66px;top:713.84px;letter-spacing:0.000px;">1</span>
<div class="f" style="left:1522px;top:711px;width:75px"></div>
<span class="t" style="left:1555.76px;top:713.84px;letter-spacing:0.000px;">0</span>
<div class="f" style="left:1603px;top:711px;width:74px"></div>
<span class="t" style="left:1636.26px;top:713.84px;letter-spacing:0.000px;">0</span>
<div class="f" style="left:1683px;top:711px;width:75px"></div>
<span class="t" style="left:1716.76px;top:713.84px;letter-spacing:0.000px;">0</span>
<div class="b" style="left:1764px;top:711px;width:112px"></div>
<span class="t" style="left:1792px;top:713.84px;letter-spacing:-0.005px;">Apprendre</span>
<span class="t" style="left:1292px;top:737.84px;letter-spacing:-0.290px;">Envoyer </span>
<span class="t" style="left:1337px;top:737.84px;letter-spacing:-0.172px;">la </span>
<span class="t" style="left:1349px;top:737.84px;letter-spacing:0.160px;">Note </span>
<span class="t" style="left:1377.66px;top:737.84px;letter-spacing:0.000px;">4 </span>
<span class="t" style="left:1387.5px;top:737.84px;letter-spacing:0.000px;">- </span>
<span class="t" style="left:1395px;top:737.84px;letter-spacing:-0.004px;">Port </span>
<span class="t" style="left:1419.66px;top:737.84px;letter-spacing:0.000px;">1</span>
<div class="f" style="left:1522px;top:735px;width:75px"></div>
<span class="t" style="left:1555.76px;top:737.84px;letter-spacing:0.000px;">0</span>
<div class="f" style="left:1603px;top:735px;width:74px"></div>
<span class="t" style="left:1636.26px;top:737.84px;letter-spacing:0.000px;">0</span>
<div class="f" style="left:1683px;top:735px;width:75px"></div>
<span class="t" style="left:1716.76px;top:737.84px;letter-spacing:0.000px;">0</span>
<div class="b" style="left:1764px;top:735px;width:112px"></div>
<span class="t" style="left:1792px;top:737.84px;letter-spacing:-0.005px;">Apprendre</span>
<span class="t" style="left:1292px;top:761.84px;letter-spacing:-0.290px;">Envoyer </span>
<span class="t" style="left:1337px;top:761.84px;letter-spacing:-0.172px;">la </span>
<span class="t" style="left:1349px;top:761.84px;letter-spacing:0.160px;">Note </span>
<span class="t" style="left:1377.66px;top:761.84px;letter-spacing:0.000px;">5 </span>
<span class="t" style="left:1387.5px;top:761.84px;letter-spacing:0.000px;">- </span>
<span class="t" style="left:1395px;top:761.84px;letter-spacing:-0.004px;">Port </span>
<span class="t" style="left:1419.66px;top:761.84px;letter-spacing:0.000px;">1</span>
<div class="f" style="left:1522px;top:759px;width:75px"></div>
<span class="t" style="left:1555.76px;top:761.84px;letter-spacing:0.000px;">0</span>
<div class="f" style="left:1603px;top:759px;width:74px"></div>
<span class="t" style="left:1636.26px;top:761.84px;letter-spacing:0.000px;">0</span>
<div class="f" style="left:1683px;top:759px;width:75px"></div>
<span class="t" style="left:1716.76px;top:761.84px;letter-spacing:0.000px;">0</span>
<div class="b" style="left:1764px;top:759px;width:112px"></div>
<span class="t" style="left:1792px;top:761.84px;letter-spacing:-0.005px;">Apprendre</span>
<span class="t" style="left:1292px;top:785.84px;letter-spacing:-0.290px;">Envoyer </span>
<span class="t" style="left:1337px;top:785.84px;letter-spacing:-0.172px;">la </span>
<span class="t" style="left:1349px;top:785.84px;letter-spacing:0.160px;">Note </span>
<span class="t" style="left:1377.66px;top:785.84px;letter-spacing:0.000px;">6 </span>
<span class="t" style="left:1387.5px;top:785.84px;letter-spacing:0.000px;">- </span>
<span class="t" style="left:1395px;top:785.84px;letter-spacing:-0.004px;">Port </span>
<span class="t" style="left:1419.66px;top:785.84px;letter-spacing:0.000px;">1</span>
<div class="f" style="left:1522px;top:783px;width:75px"></div>
<span class="t" style="left:1555.76px;top:785.84px;letter-spacing:0.000px;">0</span>
<div class="f" style="left:1603px;top:783px;width:74px"></div>
<span class="t" style="left:1636.26px;top:785.84px;letter-spacing:0.000px;">0</span>
<div class="f" style="left:1683px;top:783px;width:75px"></div>
<span class="t" style="left:1716.76px;top:785.84px;letter-spacing:0.000px;">0</span>
<div class="b" style="left:1764px;top:783px;width:112px"></div>
<span class="t" style="left:1792px;top:785.84px;letter-spacing:-0.005px;">Apprendre</span>
<span class="t" style="left:1292px;top:809.84px;letter-spacing:-0.290px;">Envoyer </span>
<span class="t" style="left:1337px;top:809.84px;letter-spacing:-0.172px;">la </span>
<span class="t" style="left:1349px;top:809.84px;letter-spacing:0.160px;">Note </span>
<span class="t" style="left:1377.66px;top:809.84px;letter-spacing:0.000px;">7 </span>
<span class="t" style="left:1387.5px;top:809.84px;letter-spacing:0.000px;">- </span>
<span class="t" style="left:1395px;top:809.84px;letter-spacing:-0.004px;">Port </span>
<span class="t" style="left:1419.66px;top:809.84px;letter-spacing:0.000px;">1</span>
<div class="f" style="left:1522px;top:807px;width:75px"></div>
<span class="t" style="left:1555.76px;top:809.84px;letter-spacing:0.000px;">0</span>
<div class="f" style="left:1603px;top:807px;width:74px"></div>
<span class="t" style="left:1636.26px;top:809.84px;letter-spacing:0.000px;">0</span>
<div class="f" style="left:1683px;top:807px;width:75px"></div>
<span class="t" style="left:1716.76px;top:809.84px;letter-spacing:0.000px;">0</span>
<div class="b" style="left:1764px;top:807px;width:112px"></div>
<span class="t" style="left:1792px;top:809.84px;letter-spacing:-0.005px;">Apprendre</span>
<span class="t" style="left:1292px;top:833.84px;letter-spacing:-0.290px;">Envoyer </span>
<span class="t" style="left:1337px;top:833.84px;letter-spacing:-0.172px;">la </span>
<span class="t" style="left:1349px;top:833.84px;letter-spacing:0.160px;">Note </span>
<span class="t" style="left:1377.66px;top:833.84px;letter-spacing:0.000px;">8 </span>
<span class="t" style="left:1387.5px;top:833.84px;letter-spacing:0.000px;">- </span>
<span class="t" style="left:1395px;top:833.84px;letter-spacing:-0.004px;">Port </span>
<span class="t" style="left:1419.66px;top:833.84px;letter-spacing:0.000px;">1</span>
<div class="f" style="left:1522px;top:831px;width:75px"></div>
<span class="t" style="left:1555.76px;top:833.84px;letter-spacing:0.000px;">0</span>
<div class="f" style="left:1603px;top:831px;width:74px"></div>
<span class="t" style="left:1636.26px;top:833.84px;letter-spacing:0.000px;">0</span>
<div class="f" style="left:1683px;top:831px;width:75px"></div>
<span class="t" style="left:1716.76px;top:833.84px;letter-spacing:0.000px;">0</span>
<div class="b" style="left:1764px;top:831px;width:112px"></div>
<span class="t" style="left:1792px;top:833.84px;letter-spacing:-0.005px;">Apprendre</span>
<span class="t" style="left:1292px;top:857.84px;letter-spacing:-0.290px;">Envoyer </span>
<span class="t" style="left:1337px;top:857.84px;letter-spacing:-0.172px;">la </span>
<span class="t" style="left:1349px;top:857.84px;letter-spacing:0.160px;">Note </span>
<span class="t" style="left:1377.66px;top:857.84px;letter-spacing:0.000px;">9 </span>
<span class="t" style="left:1387.5px;top:857.84px;letter-spacing:0.000px;">- </span>
<span class="t" style="left:1395px;top:857.84px;letter-spacing:-0.004px;">Port </span>
<span class="t" style="left:1419.66px;top:857.84px;letter-spacing:0.000px;">1</span>
<div class="f" style="left:1522px;top:855px;width:75px"></div>
<span class="t" style="left:1555.76px;top:857.84px;letter-spacing:0.000px;">0</span>
<div class="f" style="left:1603px;top:855px;width:74px"></div>
<span class="t" style="left:1636.26px;top:857.84px;letter-spacing:0.000px;">0</span>
<div class="f" style="left:1683px;top:855px;width:75px"></div>
<span class="t" style="left:1716.76px;top:857.84px;letter-spacing:0.000px;">0</span>
<div class="b" style="left:1764px;top:855px;width:112px"></div>
<span class="t" style="left:1792px;top:857.84px;letter-spacing:-0.005px;">Apprendre</span>
<span class="t" style="left:1292px;top:881.84px;letter-spacing:-0.290px;">Envoyer </span>
<span class="t" style="left:1337px;top:881.84px;letter-spacing:-0.172px;">la </span>
<span class="t" style="left:1349px;top:881.84px;letter-spacing:0.160px;">Note </span>
<span class="t" style="left:1378px;top:881.84px;letter-spacing:-0.680px;">10 </span>
<span class="t" style="left:1393.5px;top:881.84px;letter-spacing:0.000px;">- </span>
<span class="t" style="left:1401px;top:881.84px;letter-spacing:-0.004px;">Port </span>
<span class="t" style="left:1425.66px;top:881.84px;letter-spacing:0.000px;">1</span>
<div class="f" style="left:1522px;top:879px;width:75px"></div>
<span class="t" style="left:1555.76px;top:881.84px;letter-spacing:0.000px;">0</span>
<div class="f" style="left:1603px;top:879px;width:74px"></div>
<span class="t" style="left:1636.26px;top:881.84px;letter-spacing:0.000px;">0</span>
<div class="f" style="left:1683px;top:879px;width:75px"></div>
<span class="t" style="left:1716.76px;top:881.84px;letter-spacing:0.000px;">0</span>
<div class="b" style="left:1764px;top:879px;width:112px"></div>
<span class="t" style="left:1792px;top:881.84px;letter-spacing:-0.005px;">Apprendre</span>
<span class="t" style="left:1292px;top:905.84px;letter-spacing:-0.290px;">Envoyer </span>
<span class="t" style="left:1337px;top:905.84px;letter-spacing:-0.172px;">la </span>
<span class="t" style="left:1349px;top:905.84px;letter-spacing:0.160px;">Note </span>
<span class="t" style="left:1378px;top:905.84px;letter-spacing:-0.234px;">11 </span>
<span class="t" style="left:1393.5px;top:905.84px;letter-spacing:0.000px;">- </span>
<span class="t" style="left:1401px;top:905.84px;letter-spacing:-0.004px;">Port </span>
<span class="t" style="left:1425.66px;top:905.84px;letter-spacing:0.000px;">1</span>
<div class="f" style="left:1522px;top:903px;width:75px"></div>
<span class="t" style="left:1555.76px;top:905.84px;letter-spacing:0.000px;">0</span>
<div class="f" style="left:1603px;top:903px;width:74px"></div>
<span class="t" style="left:1636.26px;top:905.84px;letter-spacing:0.000px;">0</span>
<div class="f" style="left:1683px;top:903px;width:75px"></div>
<span class="t" style="left:1716.76px;top:905.84px;letter-spacing:0.000px;">0</span>
<div class="b" style="left:1764px;top:903px;width:112px"></div>
<span class="t" style="left:1792px;top:905.84px;letter-spacing:-0.005px;">Apprendre</span>
<span class="t" style="left:1292px;top:929.84px;letter-spacing:-0.290px;">Envoyer </span>
<span class="t" style="left:1337px;top:929.84px;letter-spacing:-0.172px;">la </span>
<span class="t" style="left:1349px;top:929.84px;letter-spacing:0.160px;">Note </span>
<span class="t" style="left:1378px;top:929.84px;letter-spacing:-0.680px;">12 </span>
<span class="t" style="left:1393.5px;top:929.84px;letter-spacing:0.000px;">- </span>
<span class="t" style="left:1401px;top:929.84px;letter-spacing:-0.004px;">Port </span>
<span class="t" style="left:1425.66px;top:929.84px;letter-spacing:0.000px;">1</span>
<div class="f" style="left:1522px;top:927px;width:75px"></div>
<span class="t" style="left:1555.76px;top:929.84px;letter-spacing:0.000px;">0</span>
<div class="f" style="left:1603px;top:927px;width:74px"></div>
<span class="t" style="left:1636.26px;top:929.84px;letter-spacing:0.000px;">0</span>
<div class="f" style="left:1683px;top:927px;width:75px"></div>
<span class="t" style="left:1716.76px;top:929.84px;letter-spacing:0.000px;">0</span>
<div class="b" style="left:1764px;top:927px;width:112px"></div>
<span class="t" style="left:1792px;top:929.84px;letter-spacing:-0.005px;">Apprendre</span>
<span class="t" style="left:1292px;top:953.84px;letter-spacing:-0.290px;">Envoyer </span>
<span class="t" style="left:1337px;top:953.84px;letter-spacing:-0.172px;">la </span>
<span class="t" style="left:1349px;top:953.84px;letter-spacing:0.160px;">Note </span>
<span class="t" style="left:1378px;top:953.84px;letter-spacing:-0.680px;">13 </span>
<span class="t" style="left:1393.5px;top:953.84px;letter-spacing:0.000px;">- </span>
<span class="t" style="left:1401px;top:953.84px;letter-spacing:-0.004px;">Port </span>
<span class="t" style="left:1425.66px;top:953.84px;letter-spacing:0.000px;">1</span>
<div class="f" style="left:1522px;top:951px;width:75px"></div>
<span class="t" style="left:1555.76px;top:953.84px;letter-spacing:0.000px;">0</span>
<div class="f" style="left:1603px;top:951px;width:74px"></div>
<span class="t" style="left:1636.26px;top:953.84px;letter-spacing:0.000px;">0</span>
<div class="f" style="left:1683px;top:951px;width:75px"></div>
<span class="t" style="left:1716.76px;top:953.84px;letter-spacing:0.000px;">0</span>
<div class="b" style="left:1764px;top:951px;width:112px"></div>
<span class="t" style="left:1792px;top:953.84px;letter-spacing:-0.005px;">Apprendre</span>
<span class="t" style="left:1292px;top:977.84px;letter-spacing:-0.290px;">Envoyer </span>
<span class="t" style="left:1337px;top:977.84px;letter-spacing:-0.172px;">la </span>
<span class="t" style="left:1349px;top:977.84px;letter-spacing:0.160px;">Note </span>
<span class="t" style="left:1378px;top:977.84px;letter-spacing:-0.680px;">14 </span>
<span class="t" style="left:1393.5px;top:977.84px;letter-spacing:0.000px;">- </span>
<span class="t" style="left:1401px;top:977.84px;letter-spacing:-0.004px;">Port </span>
<span class="t" style="left:1425.66px;top:977.84px;letter-spacing:0.000px;">1</span>
<div class="f" style="left:1522px;top:975px;width:75px"></div>
<span class="t" style="left:1555.76px;top:977.84px;letter-spacing:0.000px;">0</span>
<div class="f" style="left:1603px;top:975px;width:74px"></div>
<span class="t" style="left:1636.26px;top:977.84px;letter-spacing:0.000px;">0</span>
<div class="f" style="left:1683px;top:975px;width:75px"></div>
<span class="t" style="left:1716.76px;top:977.84px;letter-spacing:0.000px;">0</span>
<div class="b" style="left:1764px;top:975px;width:112px"></div>
<span class="t" style="left:1792px;top:977.84px;letter-spacing:-0.005px;">Apprendre</span>
<div style="position:absolute;left:1522px;top:999px;width:75px;height:1px;background:#4b4b4b;"></div>
<div style="position:absolute;left:1603px;top:999px;width:74px;height:1px;background:#4b4b4b;"></div>
<div style="position:absolute;left:1683px;top:999px;width:75px;height:1px;background:#4b4b4b;"></div>
<div style="position:absolute;left:1766px;top:999px;width:108px;height:1px;background:#8a86f6;"></div>
<svg style="position:absolute;left:1887px;top:652px" width="15" height="15" viewBox="0 0 15 15" shape-rendering="crispEdges">
<rect x="0" y="0" width="15" height="15" fill="#1e1029"/>
<rect x="1" y="1" width="13" height="1" fill="#fff"/><rect x="1" y="1" width="1" height="13" fill="#fff"/>
<rect x="13" y="1" width="1" height="13" fill="#a8a8a4"/><rect x="1" y="13" width="13" height="1" fill="#a8a8a4"/>
<rect x="14" y="0" width="1" height="15" fill="#6e6a66"/><rect x="0" y="14" width="15" height="1" fill="#6e6a66"/>
<rect x="6" y="5" width="1" height="1" fill="#fff"/><rect x="5" y="6" width="3" height="1" fill="#fff"/><rect x="4" y="7" width="5" height="1" fill="#fff"/></svg>
<svg style="position:absolute;left:1887px;top:985px" width="15" height="15" viewBox="0 0 15 15" shape-rendering="crispEdges">
<rect x="0" y="0" width="15" height="15" fill="#1e1029"/>
<rect x="1" y="1" width="13" height="1" fill="#fff"/><rect x="1" y="1" width="1" height="13" fill="#fff"/>
<rect x="13" y="1" width="1" height="13" fill="#a8a8a4"/><rect x="1" y="13" width="13" height="1" fill="#a8a8a4"/>
<rect x="14" y="0" width="1" height="15" fill="#6e6a66"/><rect x="0" y="14" width="15" height="1" fill="#6e6a66"/>
<rect x="4" y="5" width="5" height="1" fill="#fff"/><rect x="5" y="6" width="3" height="1" fill="#fff"/><rect x="6" y="7" width="1" height="1" fill="#fff"/></svg>
<div class="th" style="left:1887px;top:668px;width:15px;height:60px"></div>
<div class="ck" style="left:1887px;top:728px;width:15px;height:256px;background-position:1px 0;"></div>
<span class="t" style="left:1618.5px;top:1020.84px;letter-spacing:-0.828px;">KB2D </span>
<span class="t" style="left:1649.55px;top:1020.84px;letter-spacing:0.048px;">connecté </span>
<span class="t" style="left:1701.48px;top:1020.84px;letter-spacing:0.000px;">: </span>
<span class="t" style="left:1707.66px;top:1020.84px;letter-spacing:-0.138px;">Version </span>
<span class="t" style="left:1749.73px;top:1020.84px;letter-spacing:0.333px;">du </span>
<span class="t" style="left:1766.76px;top:1020.84px;letter-spacing:0.008px;">firmware </span>
<span class="t" style="left:1815.68px;top:1020.84px;letter-spacing:0.000px;">: </span>
<span class="t" style="left:1821.86px;top:1020.84px;letter-spacing:-0.581px;">8.01 </span>
<span class="t" style="left:1846.4px;top:1020.84px;letter-spacing:0.000px;">- </span>
<span class="t" style="left:1853.91px;top:1020.84px;letter-spacing:-0.076px;">S/N: </span>
<span class="t" style="left:1879.96px;top:1020.84px;letter-spacing:-0.665px;">0126</span>
</body></html>
